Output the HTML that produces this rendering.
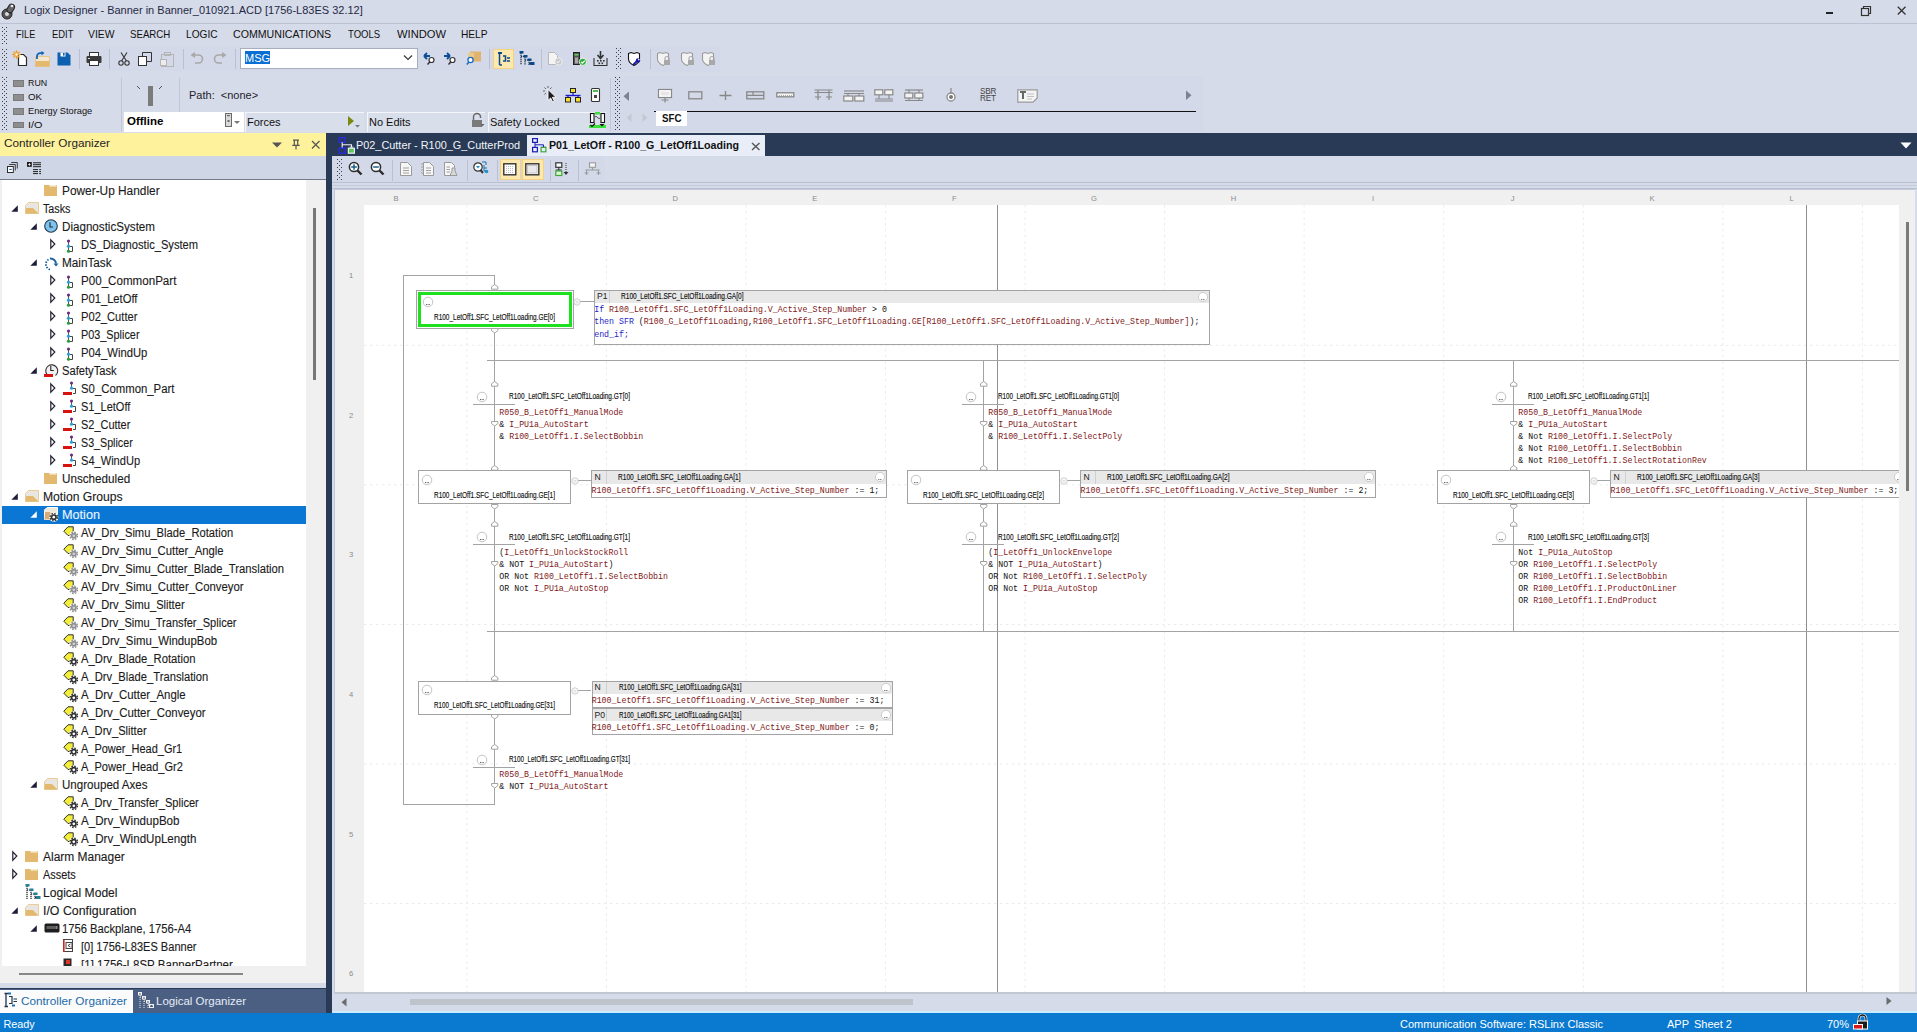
<!DOCTYPE html><html><head><meta charset="utf-8"><style>
*{margin:0;padding:0;box-sizing:border-box}
html,body{width:1917px;height:1032px;overflow:hidden;background:#d6dbe9;font-family:"Liberation Sans",sans-serif;color:#1e1e1e}
.a{position:absolute}
.t{position:absolute;white-space:nowrap;line-height:1}
.m{font-family:"Liberation Mono",monospace}
.tr{-webkit-text-stroke:0.12px currentColor}
.tn{-webkit-text-stroke:0.15px currentColor}
svg{position:absolute;overflow:visible}
</style></head><body>
<div class="a" style="left:0px;top:0px;width:1917px;height:23px;background:#d6dbe9"></div>
<div class="a" style="left:0px;top:23px;width:1917px;height:1px;background:#bcc2d3"></div>
<svg style="left:1px;top:2px" width="16" height="18" viewBox="0 0 16 18"><circle cx="6" cy="12" r="5" fill="#555" stroke="#222" stroke-width="1"/><circle cx="6" cy="12" r="2" fill="#ddd"/><rect x="7" y="2" width="6" height="9" rx="3" fill="#666" stroke="#222" transform="rotate(30 10 6)"/><circle cx="11" cy="4" r="1.3" fill="#eee"/></svg>
<div class="t" style="left:24px;top:5.49px;font-size:11px;color:#1e2a44;">Logix Designer - Banner in Banner_010921.ACD [1756-L83ES 32.12]</div>
<div class="a" style="left:1826px;top:12px;width:6.5px;height:2.2px;background:#222"></div>
<svg style="left:1860px;top:5px" width="12" height="12" viewBox="0 0 12 12"><rect x="1.5" y="3.5" width="7" height="7" fill="none" stroke="#333" stroke-width="1.2"/><path d="M3.5 3.5V1.5H10.5V8.5H8.5" fill="none" stroke="#333" stroke-width="1.2"/></svg>
<svg style="left:1897px;top:6px" width="10" height="10" viewBox="0 0 10 10"><path d="M0.8 0.8L8.5 8.5M8.5 0.8L0.8 8.5" stroke="#333" stroke-width="1.3"/></svg>
<svg style="left:2px;top:27px" width="5" height="17"><defs><pattern id="gp1" width="4" height="4" patternUnits="userSpaceOnUse"><rect x="0" y="0" width="1" height="1" fill="#3a3f4a"/><rect x="2" y="2" width="1" height="1" fill="#3a3f4a"/></pattern></defs><rect width="5" height="17" fill="url(#gp1)"/></svg>
<div class="t" style="left:16px;top:29.22px;font-size:11.2px;color:#111;transform:scaleX(0.8127);transform-origin:0 0;">FILE</div>
<div class="t" style="left:52px;top:29.22px;font-size:11.2px;color:#111;transform:scaleX(0.8398);transform-origin:0 0;">EDIT</div>
<div class="t" style="left:88px;top:29.22px;font-size:11.2px;color:#111;transform:scaleX(0.9234);transform-origin:0 0;">VIEW</div>
<div class="t" style="left:130px;top:29.22px;font-size:11.2px;color:#111;transform:scaleX(0.8644);transform-origin:0 0;">SEARCH</div>
<div class="t" style="left:186px;top:29.22px;font-size:11.2px;color:#111;transform:scaleX(0.9048);transform-origin:0 0;">LOGIC</div>
<div class="t" style="left:233px;top:29.22px;font-size:11.2px;color:#111;transform:scaleX(0.9480);transform-origin:0 0;">COMMUNICATIONS</div>
<div class="t" style="left:348px;top:29.22px;font-size:11.2px;color:#111;transform:scaleX(0.8537);transform-origin:0 0;">TOOLS</div>
<div class="t" style="left:397px;top:29.22px;font-size:11.2px;color:#111;transform:scaleX(0.9982);transform-origin:0 0;">WINDOW</div>
<div class="t" style="left:461px;top:29.22px;font-size:11.2px;color:#111;transform:scaleX(0.9068);transform-origin:0 0;">HELP</div>
<div class="a" style="left:0px;top:47px;width:614px;height:24px;background:#d3d9e8"></div>
<svg style="left:2px;top:49px" width="5" height="21"><defs><pattern id="gp2" width="4" height="4" patternUnits="userSpaceOnUse"><rect x="0" y="0" width="1" height="1" fill="#3a3f4a"/><rect x="2" y="2" width="1" height="1" fill="#3a3f4a"/></pattern></defs><rect width="5" height="21" fill="url(#gp2)"/></svg>
<div class="a" style="left:614px;top:47px;width:106px;height:25px;background:#d3d9e8"></div>
<svg style="left:12px;top:50px" width="17" height="17" viewBox="0 0 17 17"><path d="M6.5 4.5H11.5L14.5 7.5V15.5H6.5Z" fill="#fff" stroke="#2b2b2b" stroke-width="1.2"/><g stroke="#f29a18" stroke-width="1.3" stroke-linecap="round"><path d="M4.5 0.8V8.2M0.8 4.5H8.2M1.9 1.9L7.1 7.1M7.1 1.9L1.9 7.1"/></g><circle cx="4.5" cy="4.5" r="1.2" fill="#fff"/></svg>
<svg style="left:34px;top:51px" width="17" height="16" viewBox="0 0 17 16"><path d="M1.5 15.5V5.5H15.5V15.5Z" fill="#f2e6d0" stroke="#e6c88e" stroke-width="1"/><path d="M1 15.5L2 10H15.5V15.5Z" fill="#e3b96f"/><path d="M3 8V5C3 2.5 6 1.5 9 2" fill="none" stroke="#1565b4" stroke-width="1.8"/><path d="M7.5 0L10.5 2L7.5 4.5Z" fill="#1565b4"/></svg>
<svg style="left:57px;top:52px" width="14" height="14" viewBox="0 0 14 14"><path d="M0.5 0.5H10.5L13.5 3.5V13.5H0.5Z" fill="#0d5fb0"/><rect x="3.5" y="0.5" width="5" height="4" fill="#fff"/><rect x="6" y="1" width="1.6" height="2.6" fill="#0d5fb0"/></svg>
<div class="a" style="left:79px;top:49px;width:1px;height:20px;background:#b9c0d2"></div>
<svg style="left:86px;top:52px" width="16" height="14" viewBox="0 0 16 14"><rect x="3.5" y="0.5" width="9" height="4" fill="#fff" stroke="#333"/><rect x="0.5" y="4" width="15" height="7" rx="1" fill="#3b3b3b"/><rect x="3.5" y="8.5" width="9" height="5" fill="#fff" stroke="#333"/><rect x="2" y="6" width="2" height="1" fill="#ddd"/></svg>
<div class="a" style="left:109px;top:49px;width:1px;height:20px;background:#b9c0d2"></div>
<svg style="left:118px;top:52px" width="12" height="14" viewBox="0 0 12 14"><path d="M3 0.5L8.5 9M9 0.5L3.5 9" stroke="#333" stroke-width="1.1"/><circle cx="3" cy="11" r="2.2" fill="none" stroke="#333" stroke-width="1.1"/><circle cx="9" cy="11" r="2.2" fill="none" stroke="#333" stroke-width="1.1"/></svg>
<svg style="left:138px;top:52px" width="15" height="14" viewBox="0 0 15 14"><rect x="0.5" y="4.5" width="8" height="9" fill="#fff" stroke="#333"/><path d="M4.5 4.5V0.5H13.5V9.5H8.5" fill="none" stroke="#333"/></svg>
<svg style="left:160px;top:51px" width="15" height="16" viewBox="0 0 15 16"><rect x="1.5" y="3.5" width="12" height="12" fill="none" stroke="#b5b5b5"/><rect x="4.5" y="1.5" width="6" height="3" fill="none" stroke="#b5b5b5"/><rect x="0.5" y="8.5" width="6" height="6" fill="#ececec" stroke="#b5b5b5"/></svg>
<div class="a" style="left:183px;top:49px;width:1px;height:20px;background:#b9c0d2"></div>
<svg style="left:190px;top:52px" width="14" height="14" viewBox="0 0 14 14"><path d="M4 3H8.5A4 4 0 0 1 8.5 11H5" fill="none" stroke="#a8a8a8" stroke-width="1.6"/><path d="M0.5 3L5 0V6Z" fill="#a8a8a8"/></svg>
<svg style="left:213px;top:52px" width="14" height="14" viewBox="0 0 14 14"><path d="M10 3H5.5A4 4 0 0 0 5.5 11H9" fill="none" stroke="#a8a8a8" stroke-width="1.6"/><path d="M13.5 3L9 0V6Z" fill="#a8a8a8"/></svg>
<div class="a" style="left:235px;top:49px;width:1px;height:20px;background:#b9c0d2"></div>
<svg style="left:423px;top:52px" width="13" height="14" viewBox="0 0 13 14"><path d="M1 4H7M1 4L4 1M1 4L4 7" stroke="#0b4f9a" stroke-width="1.9" fill="none"/><circle cx="8.5" cy="8" r="2.5" fill="#fff" stroke="#333" stroke-width="1.2"/><path d="M7 9.8L4.5 12.5" stroke="#333" stroke-width="1.5"/></svg>
<svg style="left:444px;top:52px" width="13" height="14" viewBox="0 0 13 14"><path d="M0 4H6M6 4L3 1M6 4L3 7" stroke="#0b4f9a" stroke-width="1.9" fill="none"/><circle cx="8.5" cy="8" r="2.5" fill="#fff" stroke="#333" stroke-width="1.2"/><path d="M7 9.8L4.5 12.5" stroke="#333" stroke-width="1.5"/></svg>
<svg style="left:466px;top:51px" width="16" height="15" viewBox="0 0 16 15"><rect x="4" y="0.5" width="11" height="10" fill="#e0b46e"/><rect x="2" y="2" width="6" height="4" fill="#e9c98e"/><circle cx="4.5" cy="9" r="2.6" fill="#fff" stroke="#1d6bc0" stroke-width="1.3"/><path d="M3 11L0.8 13.5" stroke="#1d6bc0" stroke-width="1.6"/></svg>
<div class="a" style="left:489px;top:49px;width:1px;height:20px;background:#b9c0d2"></div>
<div class="a" style="left:493px;top:48.5px;width:21px;height:20px;background:#fde9b0;border:1px solid #f3d27f"></div>
<svg style="left:497px;top:52px" width="14" height="14" viewBox="0 0 14 14"><path d="M2.5 1V13M2.5 1H5M2.5 13H5M6 4H8.5V9H6M10 6H13M10 9H13" fill="none" stroke="#0b4a8a" stroke-width="1.5"/><rect x="1" y="0" width="4" height="2" fill="#0b4a8a"/></svg>
<svg style="left:519px;top:51px" width="16" height="15" viewBox="0 0 16 15"><path d="M2 2V14M2 5.5H6V14M6 9H10V14M10 12.5H13" fill="none" stroke="#1a2a40" stroke-width="1.2" stroke-dasharray="1.2 0.8"/><rect x="0.5" y="0" width="4" height="2.5" fill="#0b4a8a"/><rect x="4.5" y="4" width="4" height="2.5" fill="#0b4a8a"/><rect x="8.5" y="7.5" width="4" height="2.5" fill="#0b4a8a"/><rect x="11" y="11" width="4.5" height="3" fill="#0b4a8a"/></svg>
<div class="a" style="left:541px;top:49px;width:1px;height:20px;background:#b9c0d2"></div>
<svg style="left:548px;top:52px" width="15" height="14" viewBox="0 0 15 14"><path d="M0.5 0.5H6.5L9.5 3.5V12.5H0.5Z" fill="#f4f4f4" stroke="#b8b8b8"/><circle cx="10.5" cy="9.5" r="3.6" fill="#c8c8c8" stroke="#eee"/><path d="M8.7 9.5L10 10.8L12.3 8.3" stroke="#fff" stroke-width="1" fill="none"/></svg>
<svg style="left:573px;top:52px" width="14" height="14" viewBox="0 0 14 14"><rect x="0.5" y="0.5" width="6" height="12" fill="#555" stroke="#222"/><rect x="1.5" y="2" width="4" height="1.5" fill="#5bd35b"/><rect x="2" y="5.5" width="3" height="6" fill="#aaa"/><circle cx="9.8" cy="9.8" r="3.6" fill="#2fae3a" stroke="#fff" stroke-width="0.8"/><path d="M8 9.8L9.4 11.2L11.8 8.6" stroke="#fff" stroke-width="1.1" fill="none"/></svg>
<svg style="left:593px;top:51px" width="15" height="16" viewBox="0 0 15 16"><path d="M7.5 0V7M4.5 4L7.5 7.5L10.5 4" stroke="#333" stroke-width="1.6" fill="none"/><path d="M1 7V14.5H14V7" stroke="#333" stroke-width="1.1" fill="none"/><g fill="#333"><rect x="4" y="9" width="1.6" height="1.6"/><rect x="7" y="9" width="1.6" height="1.6"/><rect x="10" y="9" width="1.6" height="1.6"/><rect x="5.5" y="11.5" width="1.6" height="1.6"/><rect x="8.5" y="11.5" width="1.6" height="1.6"/></g></svg>
<svg style="left:616px;top:48px" width="5" height="22"><defs><pattern id="gp3" width="4" height="4" patternUnits="userSpaceOnUse"><rect x="0" y="0" width="1" height="1" fill="#3a3f4a"/><rect x="2" y="2" width="1" height="1" fill="#3a3f4a"/></pattern></defs><rect width="5" height="22" fill="url(#gp3)"/></svg>
<svg style="left:628px;top:52px" width="14" height="14" viewBox="0 0 14 14"><path d="M0.5 1.5L3 0.5L6 1.5L9 0.5L11.5 1.5V7C11.5 10 8 12.5 6 13.5C4 12.5 0.5 10 0.5 7Z" fill="#fff" stroke="#111" stroke-width="1.1"/><path d="M5 13L9 9" stroke="#1a1aa0" stroke-width="1.8"/><circle cx="10" cy="8.5" r="2.2" fill="#1a1aa0"/><circle cx="10.8" cy="7.6" r="0.8" fill="#fff"/></svg>
<div class="a" style="left:650px;top:49px;width:1px;height:20px;background:#b9c0d2"></div>
<svg style="left:657px;top:52px" width="14" height="14" viewBox="0 0 14 14"><path d="M0.5 1.5L3 0.5L6 1.5L9 0.5L11.5 1.5V7C11.5 10 8 12.5 6 13.5C4 12.5 0.5 10 0.5 7Z" fill="#f3f3f3" stroke="#9a9a9a" stroke-width="1.1"/><rect x="7" y="8" width="6" height="5" fill="#a8a8a8"/><path d="M8 8V6.5A2 2 0 0 1 12 6.5V8" fill="none" stroke="#a8a8a8" stroke-width="1.1"/></svg>
<svg style="left:681px;top:52px" width="14" height="14" viewBox="0 0 14 14"><path d="M0.5 1.5L3 0.5L6 1.5L9 0.5L11.5 1.5V7C11.5 10 8 12.5 6 13.5C4 12.5 0.5 10 0.5 7Z" fill="#f3f3f3" stroke="#9a9a9a" stroke-width="1.1"/><rect x="7" y="8" width="6" height="5" fill="#a8a8a8"/><path d="M8 8V6.5A2 2 0 0 1 12 6.5V8" fill="none" stroke="#a8a8a8" stroke-width="1.1"/></svg>
<svg style="left:702px;top:52px" width="14" height="14" viewBox="0 0 14 14"><path d="M0.5 1.5L3 0.5L6 1.5L9 0.5L11.5 1.5V7C11.5 10 8 12.5 6 13.5C4 12.5 0.5 10 0.5 7Z" fill="#f3f3f3" stroke="#9a9a9a" stroke-width="1.1"/><rect x="7" y="8" width="6" height="5" fill="#a8a8a8"/><path d="M8 8V6.5A2 2 0 0 1 12 6.5V8" fill="none" stroke="#a8a8a8" stroke-width="1.1"/></svg>
<div class="a" style="left:240px;top:48px;width:178px;height:21px;background:#fff;border:1px solid #a8aebd"></div>
<div class="a" style="left:245px;top:51px;width:25px;height:13px;background:#0a6fd2"></div>
<div class="t" style="left:245px;top:52.89px;font-size:11px;color:#fff;">MSG</div>
<svg style="left:403px;top:54px" width="10" height="8" viewBox="0 0 10 8"><path d="M1 1.5L5 5.5L9 1.5" fill="none" stroke="#333" stroke-width="1.1"/></svg>
<svg style="left:2px;top:77px" width="5" height="53"><defs><pattern id="gp4" width="4" height="4" patternUnits="userSpaceOnUse"><rect x="0" y="0" width="1" height="1" fill="#3a3f4a"/><rect x="2" y="2" width="1" height="1" fill="#3a3f4a"/></pattern></defs><rect width="5" height="53" fill="url(#gp4)"/></svg>
<div class="a" style="left:13.3px;top:80.0px;width:10.5px;height:6.7px;background:#8e8e8e;border:1px solid #7a7a7a"></div>
<div class="t" style="left:28.3px;top:78.40px;font-size:9.8px;color:#111;transform:scaleX(0.9046);transform-origin:0 0;">RUN</div>
<div class="a" style="left:13.3px;top:94.0px;width:10.5px;height:6.7px;background:#8e8e8e;border:1px solid #7a7a7a"></div>
<div class="t" style="left:28.3px;top:92.40px;font-size:9.8px;color:#111;transform:scaleX(0.9891);transform-origin:0 0;">OK</div>
<div class="a" style="left:13.3px;top:107.89999999999999px;width:10.5px;height:6.7px;background:#8e8e8e;border:1px solid #7a7a7a"></div>
<div class="t" style="left:28.3px;top:106.30px;font-size:9.8px;color:#111;transform:scaleX(0.9431);transform-origin:0 0;">Energy Storage</div>
<div class="a" style="left:13.3px;top:121.7px;width:10.5px;height:6.7px;background:#8e8e8e;border:1px solid #7a7a7a"></div>
<div class="t" style="left:28.3px;top:120.10px;font-size:9.8px;color:#111;transform:scaleX(1.1099);transform-origin:0 0;">I/O</div>
<div class="a" style="left:121px;top:78px;width:1px;height:53px;background:#c0c6d6"></div>
<div class="a" style="left:179px;top:78px;width:1px;height:35px;background:#c0c6d6"></div>
<div class="a" style="left:148px;top:86px;width:5px;height:20px;background:#7b7b7b"></div>
<svg style="left:135px;top:84px" width="30" height="10" viewBox="0 0 30 10"><path d="M2 2L5 5" stroke="#555" stroke-width="1"/><path d="M27 2L24 5" stroke="#555" stroke-width="1"/></svg>
<div class="t" style="left:189px;top:89.69px;font-size:11px;color:#1e1e2e;">Path:&nbsp; &lt;none&gt;</div>
<div class="a" style="left:124px;top:112px;width:120px;height:20px;background:#fff"></div>
<div class="t" style="left:127px;top:116.26px;font-size:11.5px;color:#000;font-weight:bold">Offline</div>
<svg style="left:225px;top:113px" width="8" height="15" viewBox="0 0 8 15"><rect x="0.5" y="0.5" width="6" height="13" fill="#d9d9d9" stroke="#6a6a6a"/><rect x="2" y="2" width="3" height="1.2" fill="#6a6a6a"/><rect x="2.5" y="7" width="2" height="2" fill="#6a6a6a"/></svg>
<svg style="left:233px;top:120px" width="8" height="6" viewBox="0 0 8 6"><path d="M1 1H7L4 4Z" fill="#777"/></svg>
<div class="a" style="left:245px;top:112px;width:119px;height:20px;background:#d9deeb;border-left:1px solid #f4f6fb;border-top:1px solid #f4f6fb"></div>
<div class="t" style="left:247px;top:116.69px;font-size:11px;color:#111;">Forces</div>
<svg style="left:347px;top:115px" width="14" height="14" viewBox="0 0 14 14"><path d="M1 1L7 6L1 11Z" fill="#7a8a10"/><path d="M8 10H13L10.5 12.5Z" fill="#777"/></svg>
<div class="a" style="left:367px;top:112px;width:118px;height:20px;background:#d9deeb;border-left:1px solid #f4f6fb;border-top:1px solid #f4f6fb"></div>
<div class="t" style="left:369px;top:116.69px;font-size:11px;color:#111;">No Edits</div>
<div class="a" style="left:488px;top:112px;width:118px;height:20px;background:#d9deeb;border-left:1px solid #f4f6fb;border-top:1px solid #f4f6fb"></div>
<div class="t" style="left:490px;top:116.69px;font-size:11px;color:#111;">Safety Locked</div>
<div class="a" style="left:612px;top:76px;width:591px;height:55px;background:#d3d9e8"></div>
<svg style="left:543px;top:86px" width="15" height="17" viewBox="0 0 15 17"><path d="M5 3.5V14.5L7.6 12L9.6 16L11.4 15.2L9.4 11.3H13Z" fill="#1e1e1e" stroke="#fff" stroke-width="0.9"/><g stroke="#555" stroke-width="0.9"><path d="M1.5 1.5L3 3M5 0V2M8.5 1.5L7 3M0 5H2M1.5 8.5L3 7"/></g></svg>
<svg style="left:565px;top:88px" width="16" height="15" viewBox="0 0 16 15"><rect x="5.5" y="0.5" width="5" height="4" fill="#f6df2d" stroke="#222" stroke-width="1"/><path d="M8 4.5V7.5M2.5 7.5H13.5M3 7.5V9.5M13 7.5V9.5" stroke="#1a1ad0" stroke-width="1.2" fill="none"/><path d="M0.5 7.5H15.5" stroke="#1a1ad0" stroke-width="1.4"/><rect x="0.5" y="9.5" width="5" height="4.5" fill="#f6df2d" stroke="#222"/><rect x="10.5" y="9.5" width="5" height="4.5" fill="#f6df2d" stroke="#222"/></svg>
<svg style="left:591px;top:88px" width="10" height="15" viewBox="0 0 10 15"><rect x="0.5" y="0.5" width="8" height="13" rx="1" fill="#fff" stroke="#333" stroke-width="1.1"/><rect x="2" y="2" width="5" height="2" fill="#4fbf4f"/><rect x="3" y="7" width="3" height="3" fill="#444"/></svg>
<div class="a" style="left:610px;top:78px;width:1px;height:53px;background:#c2c8d7"></div>
<svg style="left:589px;top:112px" width="17" height="16" viewBox="0 0 17 16"><rect x="0" y="13" width="17" height="3" fill="#3ce03c"/><rect x="6" y="0" width="5" height="2.5" fill="#3ce03c"/><rect x="1.5" y="1.5" width="3.5" height="9" fill="#fff" stroke="#111" stroke-width="1.1"/><rect x="12" y="1.5" width="3.5" height="9" fill="#fff" stroke="#111" stroke-width="1.1"/><path d="M6 5C8 3 9 8 11 6" stroke="#333" fill="none"/><path d="M1.5 13L3 14.5L6 11.5" stroke="#111" fill="none" stroke-width="1.1"/><path d="M10.5 12H15.5L13 14.5Z" fill="#111"/></svg>
<svg style="left:471px;top:113px" width="14" height="15" viewBox="0 0 14 15"><path d="M2.5 7V4A3.5 3.5 0 0 1 9.5 4V5" fill="none" stroke="#666" stroke-width="1.4"/><rect x="1" y="7" width="10" height="7" fill="#7a7a7a"/><path d="M9.5 11H13.5L11.5 13.5Z" fill="#666"/></svg>
<svg style="left:615px;top:77px" width="5" height="54"><defs><pattern id="gp5" width="4" height="4" patternUnits="userSpaceOnUse"><rect x="0" y="0" width="1" height="1" fill="#3a3f4a"/><rect x="2" y="2" width="1" height="1" fill="#3a3f4a"/></pattern></defs><rect width="5" height="54" fill="url(#gp5)"/></svg>
<svg style="left:623px;top:91px" width="7" height="11" viewBox="0 0 7 11"><path d="M6 0.5V10L0.5 5.2Z" fill="#7b8290"/></svg>
<svg style="left:658px;top:89px" width="15" height="14" viewBox="0 0 15 14"><rect x="0.5" y="0.5" width="13" height="8" fill="#fff" stroke="#888" stroke-width="1.2"/><rect x="2.5" y="2.5" width="9" height="4" fill="#e6e6e6"/><path d="M7 9V13.5M3.5 11H10.5" stroke="#888" stroke-width="1.2"/></svg>
<svg style="left:688px;top:91px" width="15" height="9" viewBox="0 0 15 9"><rect x="0.8" y="0.8" width="13" height="7" fill="none" stroke="#888" stroke-width="1.3"/></svg>
<svg style="left:719px;top:91px" width="13" height="9" viewBox="0 0 13 9"><path d="M6.5 0V9M0.5 4.5H12.5" stroke="#888" stroke-width="1.3"/></svg>
<svg style="left:746px;top:91px" width="19" height="9" viewBox="0 0 19 9"><rect x="0.8" y="0.8" width="17" height="7" fill="none" stroke="#888" stroke-width="1.3"/><path d="M1 4.3H18M7 1V4" stroke="#888" stroke-width="1.2"/></svg>
<svg style="left:776px;top:92px" width="19" height="6" viewBox="0 0 19 6"><rect x="0.8" y="0.8" width="17" height="4" fill="#f3f3f3" stroke="#888" stroke-width="1.3"/><path d="M3 3.5H16" stroke="#aaa" stroke-dasharray="1 1"/></svg>
<svg style="left:814px;top:89px" width="19" height="12" viewBox="0 0 19 12"><path d="M0.5 1H18.5M0.5 3.5H18.5M4 1V11M15 1V11M1 8H7M12 8H18" stroke="#888" stroke-width="1.2"/></svg>
<svg style="left:843px;top:90px" width="22" height="12" viewBox="0 0 22 12"><path d="M1 1H21" stroke="#888" stroke-width="1.2"/><rect x="0.8" y="6" width="9" height="5" fill="#f3f3f3" stroke="#888" stroke-width="1.2"/><rect x="11.8" y="6" width="9" height="5" fill="#f3f3f3" stroke="#888" stroke-width="1.2"/><path d="M1 3.5H21M5 3.5V6M16 3.5V6" stroke="#888" stroke-width="1.1"/></svg>
<svg style="left:874px;top:89px" width="20" height="13" viewBox="0 0 20 13"><rect x="0.8" y="0.8" width="8" height="5" fill="#f3f3f3" stroke="#888" stroke-width="1.2"/><rect x="10.8" y="0.8" width="8" height="5" fill="#f3f3f3" stroke="#888" stroke-width="1.2"/><path d="M5 6V10M15 6V10M1 10H19M1 12H19" stroke="#888" stroke-width="1.1"/></svg>
<svg style="left:904px;top:89px" width="20" height="13" viewBox="0 0 20 13"><path d="M1 1H19" stroke="#888" stroke-width="1.2"/><rect x="0.8" y="4" width="8" height="5" fill="#f3f3f3" stroke="#888" stroke-width="1.2"/><rect x="10.8" y="4" width="8" height="5" fill="#f3f3f3" stroke="#888" stroke-width="1.2"/><path d="M5 1V4M15 1V4M5 9V12M15 9V12M1 11.5H19" stroke="#888" stroke-width="1.1"/></svg>
<svg style="left:945px;top:88px" width="12" height="15" viewBox="0 0 12 15"><path d="M6 0V5" stroke="#888" stroke-width="1.2"/><circle cx="6" cy="9" r="4" fill="#fff" stroke="#888" stroke-width="1.3"/><circle cx="6" cy="9" r="2" fill="#777"/></svg>
<div class="t" style="left:980px;top:88px;font-size:8.2px;line-height:7.3px;color:#444;letter-spacing:-0.2px">SBR<br>RET</div>
<svg style="left:1017px;top:89px" width="21" height="14" viewBox="0 0 21 14"><path d="M0.8 0.8H20.2V9L16 13.2H0.8Z" fill="#f4f4f4" stroke="#999" stroke-width="1.2"/><path d="M3 3H9M6 3V10" stroke="#666" stroke-width="2"/><path d="M10 5H17M10 7.5H17M10 10H15" stroke="#bbb" stroke-width="0.9"/></svg>
<svg style="left:1185px;top:90px" width="7" height="11" viewBox="0 0 7 11"><path d="M1 0.5V10L6.5 5.2Z" fill="#7b8290"/></svg>
<div class="a" style="left:654px;top:110.5px;width:542px;height:1.6px;background:#111"></div>
<svg style="left:626px;top:113px" width="6" height="10" viewBox="0 0 6 10"><path d="M5.5 0.5V9L0.5 4.8Z" fill="#c4c8d2"/></svg>
<svg style="left:642px;top:113px" width="6" height="10" viewBox="0 0 6 10"><path d="M0.5 0.5V9L5.5 4.8Z" fill="#c4c8d2"/></svg>
<div class="a" style="left:655.5px;top:111px;width:31.5px;height:14.5px;background:#fff"></div>
<div class="t" style="left:662px;top:112.59px;font-size:11px;color:#111;font-weight:bold;transform:scaleX(0.8864);transform-origin:0 0;">SFC</div>
<div class="a" style="left:0px;top:1013px;width:1917px;height:19px;background:#0a7ad0"></div>
<div class="t" style="left:3.5px;top:1019.46px;font-size:10.8px;color:#fff;">Ready</div>
<div class="t" style="left:1400px;top:1019.19px;font-size:11px;color:#fff;">Communication Software: RSLinx Classic</div>
<div class="t" style="left:1667px;top:1019.19px;font-size:11px;color:#fff;">APP</div>
<div class="t" style="left:1694px;top:1019.19px;font-size:11px;color:#fff;">Sheet 2</div>
<div class="t" style="left:1827px;top:1019.19px;font-size:11px;color:#fff;">70%</div>
<svg style="left:1853px;top:1014px" width="17" height="16" viewBox="0 0 17 16"><path d="M6 7V4.5A3.5 3.5 0 0 1 13 4.5V7" fill="none" stroke="#fff" stroke-width="2.6"/><path d="M6 7V4.5A3.5 3.5 0 0 1 13 4.5V7" fill="none" stroke="#1a1a1a" stroke-width="1.3"/><rect x="4.5" y="7" width="10" height="8" fill="#1a1a1a" stroke="#fff" stroke-width="1"/><rect x="0.5" y="10.5" width="9" height="4.5" fill="#d81818" stroke="#fff" stroke-width="1"/></svg>
<div class="a" style="left:0px;top:133px;width:326px;height:22.5px;background:#fff29d"></div>
<div class="t" style="left:4px;top:138.21px;font-size:11.8px;color:#1e1e1e;transform:scaleX(0.9980);transform-origin:0 0;">Controller Organizer</div>
<svg style="left:271px;top:141px" width="12" height="8" viewBox="0 0 12 8"><path d="M1 1.5H11L6 6.5Z" fill="#555"/></svg>
<svg style="left:291px;top:139px" width="10" height="12" viewBox="0 0 10 12"><path d="M2 1.2H8M3.3 1.2V6M6.7 1.2V6M1.3 6.3H8.7M5 6.5V10.5" fill="none" stroke="#555" stroke-width="1.2"/></svg>
<svg style="left:311px;top:140px" width="10" height="10" viewBox="0 0 10 10"><path d="M1 1L8.5 8.5M8.5 1L1 8.5" stroke="#555" stroke-width="1.25"/></svg>
<div class="a" style="left:0px;top:155.5px;width:326px;height:24px;background:#cfd6e5"></div>
<div class="a" style="left:0px;top:178.8px;width:326px;height:1.2px;background:#737a8c"></div>
<svg style="left:6px;top:161px" width="14" height="14" viewBox="0 0 14 14"><path d="M5.2 1.5H11.3V7.5M3.2 3.5H9.3V9.5" fill="none" stroke="#2b2b2b" stroke-width="0.9"/><rect x="1.5" y="5.5" width="5.8" height="6" fill="#fff" stroke="#2b2b2b" stroke-width="1"/><path d="M3.2 8.4H5.8" stroke="#1a6fb0" stroke-width="1.1"/></svg>
<svg style="left:26px;top:161px" width="16" height="15" viewBox="0 0 16 15"><rect x="1" y="1" width="4.8" height="4.8" fill="#1e1e1e"/><path d="M3.4 1.8L3.9 2.9L5 3.4L3.9 3.9L3.4 5L2.9 3.9L1.8 3.4L2.9 2.9Z" fill="#fff"/><path d="M7 1.8H15M7 3.7H15M7 5.7H15M7 8.6H12M7 10.6H12M7 12.6H12M13.2 8.6H15M13.2 10.6H15M13.2 12.6H15" stroke="#222" stroke-width="1"/></svg>
<div class="a" style="left:0px;top:180px;width:326px;height:809px;background:#f0f0f0"></div>
<div class="a" style="left:2px;top:180px;width:304px;height:786px;background:#fff"></div>
<div class="a" style="left:313px;top:208px;width:3px;height:172px;background:#777"></div>
<div class="a" style="left:19px;top:972.5px;width:224px;height:2px;background:#888"></div>
<div class="a" style="left:0px;top:983px;width:326px;height:6px;background:#d6dbe9"></div>
<div class="a" style="left:0px;top:988px;width:326px;height:1px;background:#2b3a55"></div>
<div class="a" style="left:0;top:0;width:306px;height:966px;overflow:hidden"><svg style="left:44.4px;top:184px" width="14" height="12" viewBox="0 0 14 12"><rect x="0" y="1" width="13" height="11" fill="#e3b96f"/><rect x="5.5" y="1" width="7" height="1.6" fill="#f7ecd4"/></svg>
<div class="t tr" style="left:62.4px;top:184.74px;font-size:12px;color:#1a1a1a;transform:scaleX(0.9888);transform-origin:0 0;">Power-Up Handler</div>
<svg style="left:10.5px;top:205.0px" width="8" height="8" viewBox="0 0 8 8"><path d="M6.8 0.3V6.8H0.3Z" fill="#1e1e3a"/></svg>
<svg style="left:25.200000000000003px;top:202px" width="14" height="12" viewBox="0 0 14 12"><path d="M0.5 11.5V3.5L3.5 0.5H13.5V11.5Z" fill="#e9e6e2" stroke="#e8cd9a"/><path d="M0.5 11.5L1 6H8L13.5 11.5Z" fill="#e3b96f"/></svg>
<div class="t tr" style="left:43.2px;top:202.74px;font-size:12px;color:#1a1a1a;transform:scaleX(0.8933);transform-origin:0 0;">Tasks</div>
<svg style="left:29.8px;top:223.0px" width="8" height="8" viewBox="0 0 8 8"><path d="M6.8 0.3V6.8H0.3Z" fill="#1e1e3a"/></svg>
<svg style="left:44.4px;top:219px" width="14" height="14" viewBox="0 0 14 14"><circle cx="7" cy="7" r="6.3" fill="#7fc4ee" stroke="#2a3848" stroke-width="1.1"/><path d="M6 3.2V8H9" fill="none" stroke="#1e2a3a" stroke-width="1.1"/></svg>
<div class="t tr" style="left:62.4px;top:220.74px;font-size:12px;color:#1a1a1a;transform:scaleX(0.9684);transform-origin:0 0;">DiagnosticSystem</div>
<svg style="left:50.3px;top:238.6px" width="7" height="11" viewBox="0 0 7 11"><path d="M0.8 0.8L4.8 5L0.8 9.3Z" fill="none" stroke="#1e1e30" stroke-width="1.2"/></svg>
<svg style="left:64.3px;top:237.5px" width="12" height="16" viewBox="0 0 12 16"><path d="M4.5 3V13" stroke="#555" stroke-width="1"/><path d="M4.5 8.5H8.5V13.5H4.5" fill="none" stroke="#444" stroke-width="1"/><circle cx="4.5" cy="3" r="1.6" fill="#6a2c82"/><circle cx="4.5" cy="8.2" r="1.6" fill="#2aa0d8"/><circle cx="4.5" cy="13.2" r="1.6" fill="#2e9a3a"/></svg>
<div class="t tr" style="left:81.3px;top:238.74px;font-size:12px;color:#1a1a1a;transform:scaleX(0.9290);transform-origin:0 0;">DS_Diagnostic_System</div>
<svg style="left:29.8px;top:259.0px" width="8" height="8" viewBox="0 0 8 8"><path d="M6.8 0.3V6.8H0.3Z" fill="#1e1e3a"/></svg>
<svg style="left:44.4px;top:256.5px" width="15" height="14" viewBox="0 0 15 14"><path d="M6 12.5A5.5 5.5 0 0 1 4.5 2.5" fill="none" stroke="#1a5f9e" stroke-width="1.8" stroke-dasharray="1.5 1.3"/><path d="M6 1.5A5.5 5.5 0 0 1 12 6.5" fill="none" stroke="#1a5f9e" stroke-width="2"/><path d="M9.5 6.5H14.5L12 9.5Z" fill="#1a5f9e"/></svg>
<div class="t tr" style="left:62.4px;top:256.74px;font-size:12px;color:#1a1a1a;transform:scaleX(0.9786);transform-origin:0 0;">MainTask</div>
<svg style="left:50.3px;top:274.6px" width="7" height="11" viewBox="0 0 7 11"><path d="M0.8 0.8L4.8 5L0.8 9.3Z" fill="none" stroke="#1e1e30" stroke-width="1.2"/></svg>
<svg style="left:64.3px;top:273.5px" width="12" height="16" viewBox="0 0 12 16"><path d="M4.5 3V13" stroke="#555" stroke-width="1"/><path d="M4.5 8.5H8.5V13.5H4.5" fill="none" stroke="#444" stroke-width="1"/><circle cx="4.5" cy="3" r="1.6" fill="#6a2c82"/><circle cx="4.5" cy="8.2" r="1.6" fill="#2aa0d8"/><circle cx="4.5" cy="13.2" r="1.6" fill="#2e9a3a"/></svg>
<div class="t tr" style="left:81.3px;top:274.74px;font-size:12px;color:#1a1a1a;transform:scaleX(0.9664);transform-origin:0 0;">P00_CommonPart</div>
<svg style="left:50.3px;top:292.6px" width="7" height="11" viewBox="0 0 7 11"><path d="M0.8 0.8L4.8 5L0.8 9.3Z" fill="none" stroke="#1e1e30" stroke-width="1.2"/></svg>
<svg style="left:64.3px;top:291.5px" width="12" height="16" viewBox="0 0 12 16"><path d="M4.5 3V13" stroke="#555" stroke-width="1"/><path d="M4.5 8.5H8.5V13.5H4.5" fill="none" stroke="#444" stroke-width="1"/><circle cx="4.5" cy="3" r="1.6" fill="#6a2c82"/><circle cx="4.5" cy="8.2" r="1.6" fill="#2aa0d8"/><circle cx="4.5" cy="13.2" r="1.6" fill="#2e9a3a"/></svg>
<div class="t tr" style="left:81.3px;top:292.74px;font-size:12px;color:#1a1a1a;transform:scaleX(0.9324);transform-origin:0 0;">P01_LetOff</div>
<svg style="left:50.3px;top:310.6px" width="7" height="11" viewBox="0 0 7 11"><path d="M0.8 0.8L4.8 5L0.8 9.3Z" fill="none" stroke="#1e1e30" stroke-width="1.2"/></svg>
<svg style="left:64.3px;top:309.5px" width="12" height="16" viewBox="0 0 12 16"><path d="M4.5 3V13" stroke="#555" stroke-width="1"/><path d="M4.5 8.5H8.5V13.5H4.5" fill="none" stroke="#444" stroke-width="1"/><circle cx="4.5" cy="3" r="1.6" fill="#6a2c82"/><circle cx="4.5" cy="8.2" r="1.6" fill="#2aa0d8"/><circle cx="4.5" cy="13.2" r="1.6" fill="#2e9a3a"/></svg>
<div class="t tr" style="left:81.3px;top:310.74px;font-size:12px;color:#1a1a1a;transform:scaleX(0.9291);transform-origin:0 0;">P02_Cutter</div>
<svg style="left:50.3px;top:328.6px" width="7" height="11" viewBox="0 0 7 11"><path d="M0.8 0.8L4.8 5L0.8 9.3Z" fill="none" stroke="#1e1e30" stroke-width="1.2"/></svg>
<svg style="left:64.3px;top:327.5px" width="12" height="16" viewBox="0 0 12 16"><path d="M4.5 3V13" stroke="#555" stroke-width="1"/><path d="M4.5 8.5H8.5V13.5H4.5" fill="none" stroke="#444" stroke-width="1"/><circle cx="4.5" cy="3" r="1.6" fill="#6a2c82"/><circle cx="4.5" cy="8.2" r="1.6" fill="#2aa0d8"/><circle cx="4.5" cy="13.2" r="1.6" fill="#2e9a3a"/></svg>
<div class="t tr" style="left:81.3px;top:328.74px;font-size:12px;color:#1a1a1a;transform:scaleX(0.9041);transform-origin:0 0;">P03_Splicer</div>
<svg style="left:50.3px;top:346.6px" width="7" height="11" viewBox="0 0 7 11"><path d="M0.8 0.8L4.8 5L0.8 9.3Z" fill="none" stroke="#1e1e30" stroke-width="1.2"/></svg>
<svg style="left:64.3px;top:345.5px" width="12" height="16" viewBox="0 0 12 16"><path d="M4.5 3V13" stroke="#555" stroke-width="1"/><path d="M4.5 8.5H8.5V13.5H4.5" fill="none" stroke="#444" stroke-width="1"/><circle cx="4.5" cy="3" r="1.6" fill="#6a2c82"/><circle cx="4.5" cy="8.2" r="1.6" fill="#2aa0d8"/><circle cx="4.5" cy="13.2" r="1.6" fill="#2e9a3a"/></svg>
<div class="t tr" style="left:81.3px;top:346.74px;font-size:12px;color:#1a1a1a;transform:scaleX(0.9377);transform-origin:0 0;">P04_WindUp</div>
<svg style="left:29.8px;top:367.0px" width="8" height="8" viewBox="0 0 8 8"><path d="M6.8 0.3V6.8H0.3Z" fill="#1e1e3a"/></svg>
<svg style="left:44.4px;top:363px" width="15" height="15" viewBox="0 0 15 15"><path d="M3 11.5A6 6 0 1 1 11.5 12.5" fill="#f0f0f0" stroke="#333" stroke-width="1.1"/><path d="M6.8 2.5V7.5H9.8" fill="none" stroke="#222" stroke-width="1.1"/><rect x="0" y="11" width="9" height="3" fill="#d6140d"/></svg>
<div class="t tr" style="left:62.4px;top:364.74px;font-size:12px;color:#1a1a1a;transform:scaleX(0.9303);transform-origin:0 0;">SafetyTask</div>
<svg style="left:50.3px;top:382.6px" width="7" height="11" viewBox="0 0 7 11"><path d="M0.8 0.8L4.8 5L0.8 9.3Z" fill="none" stroke="#1e1e30" stroke-width="1.2"/></svg>
<svg style="left:63.3px;top:380px" width="14" height="16" viewBox="0 0 14 16"><path d="M8.5 3V8" stroke="#555" stroke-width="1"/><path d="M8.5 8.5H12.5V13.5H10" fill="none" stroke="#444" stroke-width="1"/><circle cx="8.5" cy="3" r="1.6" fill="#6a2c82"/><circle cx="8.5" cy="8.2" r="1.6" fill="#2aa0d8"/><rect x="0" y="12" width="9" height="3" fill="#d6140d"/></svg>
<div class="t tr" style="left:81.3px;top:382.74px;font-size:12px;color:#1a1a1a;transform:scaleX(0.9462);transform-origin:0 0;">S0_Common_Part</div>
<svg style="left:50.3px;top:400.6px" width="7" height="11" viewBox="0 0 7 11"><path d="M0.8 0.8L4.8 5L0.8 9.3Z" fill="none" stroke="#1e1e30" stroke-width="1.2"/></svg>
<svg style="left:63.3px;top:398px" width="14" height="16" viewBox="0 0 14 16"><path d="M8.5 3V8" stroke="#555" stroke-width="1"/><path d="M8.5 8.5H12.5V13.5H10" fill="none" stroke="#444" stroke-width="1"/><circle cx="8.5" cy="3" r="1.6" fill="#6a2c82"/><circle cx="8.5" cy="8.2" r="1.6" fill="#2aa0d8"/><rect x="0" y="12" width="9" height="3" fill="#d6140d"/></svg>
<div class="t tr" style="left:81.3px;top:400.74px;font-size:12px;color:#1a1a1a;transform:scaleX(0.9160);transform-origin:0 0;">S1_LetOff</div>
<svg style="left:50.3px;top:418.6px" width="7" height="11" viewBox="0 0 7 11"><path d="M0.8 0.8L4.8 5L0.8 9.3Z" fill="none" stroke="#1e1e30" stroke-width="1.2"/></svg>
<svg style="left:63.3px;top:416px" width="14" height="16" viewBox="0 0 14 16"><path d="M8.5 3V8" stroke="#555" stroke-width="1"/><path d="M8.5 8.5H12.5V13.5H10" fill="none" stroke="#444" stroke-width="1"/><circle cx="8.5" cy="3" r="1.6" fill="#6a2c82"/><circle cx="8.5" cy="8.2" r="1.6" fill="#2aa0d8"/><rect x="0" y="12" width="9" height="3" fill="#d6140d"/></svg>
<div class="t tr" style="left:81.3px;top:418.74px;font-size:12px;color:#1a1a1a;transform:scaleX(0.9125);transform-origin:0 0;">S2_Cutter</div>
<svg style="left:50.3px;top:436.6px" width="7" height="11" viewBox="0 0 7 11"><path d="M0.8 0.8L4.8 5L0.8 9.3Z" fill="none" stroke="#1e1e30" stroke-width="1.2"/></svg>
<svg style="left:63.3px;top:434px" width="14" height="16" viewBox="0 0 14 16"><path d="M8.5 3V8" stroke="#555" stroke-width="1"/><path d="M8.5 8.5H12.5V13.5H10" fill="none" stroke="#444" stroke-width="1"/><circle cx="8.5" cy="3" r="1.6" fill="#6a2c82"/><circle cx="8.5" cy="8.2" r="1.6" fill="#2aa0d8"/><rect x="0" y="12" width="9" height="3" fill="#d6140d"/></svg>
<div class="t tr" style="left:81.3px;top:436.74px;font-size:12px;color:#1a1a1a;transform:scaleX(0.8909);transform-origin:0 0;">S3_Splicer</div>
<svg style="left:50.3px;top:454.6px" width="7" height="11" viewBox="0 0 7 11"><path d="M0.8 0.8L4.8 5L0.8 9.3Z" fill="none" stroke="#1e1e30" stroke-width="1.2"/></svg>
<svg style="left:63.3px;top:452px" width="14" height="16" viewBox="0 0 14 16"><path d="M8.5 3V8" stroke="#555" stroke-width="1"/><path d="M8.5 8.5H12.5V13.5H10" fill="none" stroke="#444" stroke-width="1"/><circle cx="8.5" cy="3" r="1.6" fill="#6a2c82"/><circle cx="8.5" cy="8.2" r="1.6" fill="#2aa0d8"/><rect x="0" y="12" width="9" height="3" fill="#d6140d"/></svg>
<div class="t tr" style="left:81.3px;top:454.74px;font-size:12px;color:#1a1a1a;transform:scaleX(0.9230);transform-origin:0 0;">S4_WindUp</div>
<svg style="left:44.4px;top:472px" width="14" height="12" viewBox="0 0 14 12"><rect x="0" y="1" width="13" height="11" fill="#e3b96f"/><rect x="5.5" y="1" width="7" height="1.6" fill="#f7ecd4"/></svg>
<div class="t tr" style="left:62.4px;top:472.74px;font-size:12px;color:#1a1a1a;transform:scaleX(0.9736);transform-origin:0 0;">Unscheduled</div>
<svg style="left:10.5px;top:493.0px" width="8" height="8" viewBox="0 0 8 8"><path d="M6.8 0.3V6.8H0.3Z" fill="#1e1e3a"/></svg>
<svg style="left:25.200000000000003px;top:490px" width="14" height="12" viewBox="0 0 14 12"><path d="M0.5 11.5V3.5L3.5 0.5H13.5V11.5Z" fill="#e9e6e2" stroke="#e8cd9a"/><path d="M0.5 11.5L1 6H8L13.5 11.5Z" fill="#e3b96f"/></svg>
<div class="t tr" style="left:43.2px;top:490.74px;font-size:12px;color:#1a1a1a;transform:scaleX(1.0114);transform-origin:0 0;">Motion Groups</div>
<div class="a" style="left:2px;top:506px;width:304px;height:18px;background:#0a77d5"></div>
<svg style="left:29.8px;top:511.0px" width="8" height="8" viewBox="0 0 8 8"><path d="M6.8 0.3V6.8H0.3Z" fill="#fff"/></svg>
<svg style="left:44.4px;top:507px" width="16" height="15" viewBox="0 0 16 15"><path d="M0.5 12.5V3L3 0.5H13.5V12.5Z" fill="#f1e8dc" stroke="#fff" stroke-width="1"/><path d="M0.5 12.5L1 5H6L9 12.5Z" fill="#d9ab78"/><circle cx="9.8" cy="10.2" r="4.5" fill="#fff"/><circle cx="9.8" cy="10.2" r="3.7" fill="none" stroke="#2e2e2e" stroke-width="1.3" stroke-dasharray="1.598 1.308"/><circle cx="9.8" cy="10.2" r="3.0" fill="#2e2e2e"/><circle cx="9.8" cy="10.2" r="1.35" fill="#fff"/></svg>
<div class="t tr" style="left:62.4px;top:508.74px;font-size:12px;color:#e8f6ff;transform:scaleX(1.0550);transform-origin:0 0;">Motion</div>
<svg style="left:63.3px;top:526px" width="17" height="15" viewBox="0 0 17 15"><path d="M0.8 5.2L5 0.8H10.2V9.5H5Z" fill="#f4ee3a" stroke="#2e2e2e" stroke-width="1"/><circle cx="10.8" cy="9.8" r="4.5" fill="#fff"/><circle cx="10.8" cy="9.8" r="3.7" fill="none" stroke="#8e8e8e" stroke-width="1.3" stroke-dasharray="1.598 1.308"/><circle cx="10.8" cy="9.8" r="3.0" fill="#8e8e8e"/><circle cx="10.8" cy="9.8" r="1.35" fill="#d0d0d0"/></svg>
<div class="t tr" style="left:81.3px;top:526.74px;font-size:12px;color:#1a1a1a;transform:scaleX(0.9320);transform-origin:0 0;">AV_Drv_Simu_Blade_Rotation</div>
<svg style="left:63.3px;top:544px" width="17" height="15" viewBox="0 0 17 15"><path d="M0.8 5.2L5 0.8H10.2V9.5H5Z" fill="#f4ee3a" stroke="#2e2e2e" stroke-width="1"/><circle cx="10.8" cy="9.8" r="4.5" fill="#fff"/><circle cx="10.8" cy="9.8" r="3.7" fill="none" stroke="#8e8e8e" stroke-width="1.3" stroke-dasharray="1.598 1.308"/><circle cx="10.8" cy="9.8" r="3.0" fill="#8e8e8e"/><circle cx="10.8" cy="9.8" r="1.35" fill="#d0d0d0"/></svg>
<div class="t tr" style="left:81.3px;top:544.74px;font-size:12px;color:#1a1a1a;transform:scaleX(0.9432);transform-origin:0 0;">AV_Drv_Simu_Cutter_Angle</div>
<svg style="left:63.3px;top:562px" width="17" height="15" viewBox="0 0 17 15"><path d="M0.8 5.2L5 0.8H10.2V9.5H5Z" fill="#f4ee3a" stroke="#2e2e2e" stroke-width="1"/><circle cx="10.8" cy="9.8" r="4.5" fill="#fff"/><circle cx="10.8" cy="9.8" r="3.7" fill="none" stroke="#8e8e8e" stroke-width="1.3" stroke-dasharray="1.598 1.308"/><circle cx="10.8" cy="9.8" r="3.0" fill="#8e8e8e"/><circle cx="10.8" cy="9.8" r="1.35" fill="#d0d0d0"/></svg>
<div class="t tr" style="left:81.3px;top:562.74px;font-size:12px;color:#1a1a1a;transform:scaleX(0.9365);transform-origin:0 0;">AV_Drv_Simu_Cutter_Blade_Translation</div>
<svg style="left:63.3px;top:580px" width="17" height="15" viewBox="0 0 17 15"><path d="M0.8 5.2L5 0.8H10.2V9.5H5Z" fill="#f4ee3a" stroke="#2e2e2e" stroke-width="1"/><circle cx="10.8" cy="9.8" r="4.5" fill="#fff"/><circle cx="10.8" cy="9.8" r="3.7" fill="none" stroke="#8e8e8e" stroke-width="1.3" stroke-dasharray="1.598 1.308"/><circle cx="10.8" cy="9.8" r="3.0" fill="#8e8e8e"/><circle cx="10.8" cy="9.8" r="1.35" fill="#d0d0d0"/></svg>
<div class="t tr" style="left:81.3px;top:580.74px;font-size:12px;color:#1a1a1a;transform:scaleX(0.9462);transform-origin:0 0;">AV_Drv_Simu_Cutter_Conveyor</div>
<svg style="left:63.3px;top:598px" width="17" height="15" viewBox="0 0 17 15"><path d="M0.8 5.2L5 0.8H10.2V9.5H5Z" fill="#f4ee3a" stroke="#2e2e2e" stroke-width="1"/><circle cx="10.8" cy="9.8" r="4.5" fill="#fff"/><circle cx="10.8" cy="9.8" r="3.7" fill="none" stroke="#8e8e8e" stroke-width="1.3" stroke-dasharray="1.598 1.308"/><circle cx="10.8" cy="9.8" r="3.0" fill="#8e8e8e"/><circle cx="10.8" cy="9.8" r="1.35" fill="#d0d0d0"/></svg>
<div class="t tr" style="left:81.3px;top:598.74px;font-size:12px;color:#1a1a1a;transform:scaleX(0.9265);transform-origin:0 0;">AV_Drv_Simu_Slitter</div>
<svg style="left:63.3px;top:616px" width="17" height="15" viewBox="0 0 17 15"><path d="M0.8 5.2L5 0.8H10.2V9.5H5Z" fill="#f4ee3a" stroke="#2e2e2e" stroke-width="1"/><circle cx="10.8" cy="9.8" r="4.5" fill="#fff"/><circle cx="10.8" cy="9.8" r="3.7" fill="none" stroke="#8e8e8e" stroke-width="1.3" stroke-dasharray="1.598 1.308"/><circle cx="10.8" cy="9.8" r="3.0" fill="#8e8e8e"/><circle cx="10.8" cy="9.8" r="1.35" fill="#d0d0d0"/></svg>
<div class="t tr" style="left:81.3px;top:616.74px;font-size:12px;color:#1a1a1a;transform:scaleX(0.9216);transform-origin:0 0;">AV_Drv_Simu_Transfer_Splicer</div>
<svg style="left:63.3px;top:634px" width="17" height="15" viewBox="0 0 17 15"><path d="M0.8 5.2L5 0.8H10.2V9.5H5Z" fill="#f4ee3a" stroke="#2e2e2e" stroke-width="1"/><circle cx="10.8" cy="9.8" r="4.5" fill="#fff"/><circle cx="10.8" cy="9.8" r="3.7" fill="none" stroke="#8e8e8e" stroke-width="1.3" stroke-dasharray="1.598 1.308"/><circle cx="10.8" cy="9.8" r="3.0" fill="#8e8e8e"/><circle cx="10.8" cy="9.8" r="1.35" fill="#d0d0d0"/></svg>
<div class="t tr" style="left:81.3px;top:634.74px;font-size:12px;color:#1a1a1a;transform:scaleX(0.9506);transform-origin:0 0;">AV_Drv_Simu_WindupBob</div>
<svg style="left:63.3px;top:652px" width="17" height="15" viewBox="0 0 17 15"><path d="M0.8 5.2L5 0.8H10.2V9.5H5Z" fill="#f4ee3a" stroke="#2e2e2e" stroke-width="1"/><circle cx="10.8" cy="9.8" r="4.5" fill="#fff"/><circle cx="10.8" cy="9.8" r="3.7" fill="none" stroke="#2e2e2e" stroke-width="1.3" stroke-dasharray="1.598 1.308"/><circle cx="10.8" cy="9.8" r="3.0" fill="#2e2e2e"/><circle cx="10.8" cy="9.8" r="1.35" fill="#fff"/></svg>
<div class="t tr" style="left:81.3px;top:652.74px;font-size:12px;color:#1a1a1a;transform:scaleX(0.9371);transform-origin:0 0;">A_Drv_Blade_Rotation</div>
<svg style="left:63.3px;top:670px" width="17" height="15" viewBox="0 0 17 15"><path d="M0.8 5.2L5 0.8H10.2V9.5H5Z" fill="#f4ee3a" stroke="#2e2e2e" stroke-width="1"/><circle cx="10.8" cy="9.8" r="4.5" fill="#fff"/><circle cx="10.8" cy="9.8" r="3.7" fill="none" stroke="#2e2e2e" stroke-width="1.3" stroke-dasharray="1.598 1.308"/><circle cx="10.8" cy="9.8" r="3.0" fill="#2e2e2e"/><circle cx="10.8" cy="9.8" r="1.35" fill="#fff"/></svg>
<div class="t tr" style="left:81.3px;top:670.74px;font-size:12px;color:#1a1a1a;transform:scaleX(0.9340);transform-origin:0 0;">A_Drv_Blade_Translation</div>
<svg style="left:63.3px;top:688px" width="17" height="15" viewBox="0 0 17 15"><path d="M0.8 5.2L5 0.8H10.2V9.5H5Z" fill="#f4ee3a" stroke="#2e2e2e" stroke-width="1"/><circle cx="10.8" cy="9.8" r="4.5" fill="#fff"/><circle cx="10.8" cy="9.8" r="3.7" fill="none" stroke="#2e2e2e" stroke-width="1.3" stroke-dasharray="1.598 1.308"/><circle cx="10.8" cy="9.8" r="3.0" fill="#2e2e2e"/><circle cx="10.8" cy="9.8" r="1.35" fill="#fff"/></svg>
<div class="t tr" style="left:81.3px;top:688.74px;font-size:12px;color:#1a1a1a;transform:scaleX(0.9504);transform-origin:0 0;">A_Drv_Cutter_Angle</div>
<svg style="left:63.3px;top:706px" width="17" height="15" viewBox="0 0 17 15"><path d="M0.8 5.2L5 0.8H10.2V9.5H5Z" fill="#f4ee3a" stroke="#2e2e2e" stroke-width="1"/><circle cx="10.8" cy="9.8" r="4.5" fill="#fff"/><circle cx="10.8" cy="9.8" r="3.7" fill="none" stroke="#2e2e2e" stroke-width="1.3" stroke-dasharray="1.598 1.308"/><circle cx="10.8" cy="9.8" r="3.0" fill="#2e2e2e"/><circle cx="10.8" cy="9.8" r="1.35" fill="#fff"/></svg>
<div class="t tr" style="left:81.3px;top:706.74px;font-size:12px;color:#1a1a1a;transform:scaleX(0.9532);transform-origin:0 0;">A_Drv_Cutter_Conveyor</div>
<svg style="left:63.3px;top:724px" width="17" height="15" viewBox="0 0 17 15"><path d="M0.8 5.2L5 0.8H10.2V9.5H5Z" fill="#f4ee3a" stroke="#2e2e2e" stroke-width="1"/><circle cx="10.8" cy="9.8" r="4.5" fill="#fff"/><circle cx="10.8" cy="9.8" r="3.7" fill="none" stroke="#2e2e2e" stroke-width="1.3" stroke-dasharray="1.598 1.308"/><circle cx="10.8" cy="9.8" r="3.0" fill="#2e2e2e"/><circle cx="10.8" cy="9.8" r="1.35" fill="#fff"/></svg>
<div class="t tr" style="left:81.3px;top:724.74px;font-size:12px;color:#1a1a1a;transform:scaleX(0.9280);transform-origin:0 0;">A_Drv_Slitter</div>
<svg style="left:63.3px;top:742px" width="17" height="15" viewBox="0 0 17 15"><path d="M0.8 5.2L5 0.8H10.2V9.5H5Z" fill="#f4ee3a" stroke="#2e2e2e" stroke-width="1"/><circle cx="10.8" cy="9.8" r="4.5" fill="#fff"/><circle cx="10.8" cy="9.8" r="3.7" fill="none" stroke="#2e2e2e" stroke-width="1.3" stroke-dasharray="1.598 1.308"/><circle cx="10.8" cy="9.8" r="3.0" fill="#2e2e2e"/><circle cx="10.8" cy="9.8" r="1.35" fill="#fff"/></svg>
<div class="t tr" style="left:81.3px;top:742.74px;font-size:12px;color:#1a1a1a;transform:scaleX(0.9139);transform-origin:0 0;">A_Power_Head_Gr1</div>
<svg style="left:63.3px;top:760px" width="17" height="15" viewBox="0 0 17 15"><path d="M0.8 5.2L5 0.8H10.2V9.5H5Z" fill="#f4ee3a" stroke="#2e2e2e" stroke-width="1"/><circle cx="10.8" cy="9.8" r="4.5" fill="#fff"/><circle cx="10.8" cy="9.8" r="3.7" fill="none" stroke="#2e2e2e" stroke-width="1.3" stroke-dasharray="1.598 1.308"/><circle cx="10.8" cy="9.8" r="3.0" fill="#2e2e2e"/><circle cx="10.8" cy="9.8" r="1.35" fill="#fff"/></svg>
<div class="t tr" style="left:81.3px;top:760.74px;font-size:12px;color:#1a1a1a;transform:scaleX(0.9203);transform-origin:0 0;">A_Power_Head_Gr2</div>
<svg style="left:29.8px;top:781.0px" width="8" height="8" viewBox="0 0 8 8"><path d="M6.8 0.3V6.8H0.3Z" fill="#1e1e3a"/></svg>
<svg style="left:44.4px;top:778px" width="14" height="12" viewBox="0 0 14 12"><path d="M0.5 11.5V3.5L3.5 0.5H13.5V11.5Z" fill="#e9e6e2" stroke="#e8cd9a"/><path d="M0.5 11.5L1 6H8L13.5 11.5Z" fill="#e3b96f"/></svg>
<div class="t tr" style="left:62.4px;top:778.74px;font-size:12px;color:#1a1a1a;transform:scaleX(0.9643);transform-origin:0 0;">Ungrouped Axes</div>
<svg style="left:63.3px;top:796px" width="17" height="15" viewBox="0 0 17 15"><path d="M0.8 5.2L5 0.8H10.2V9.5H5Z" fill="#f4ee3a" stroke="#2e2e2e" stroke-width="1"/><circle cx="10.8" cy="9.8" r="4.5" fill="#fff"/><circle cx="10.8" cy="9.8" r="3.7" fill="none" stroke="#2e2e2e" stroke-width="1.3" stroke-dasharray="1.598 1.308"/><circle cx="10.8" cy="9.8" r="3.0" fill="#2e2e2e"/><circle cx="10.8" cy="9.8" r="1.35" fill="#fff"/></svg>
<div class="t tr" style="left:81.3px;top:796.74px;font-size:12px;color:#1a1a1a;transform:scaleX(0.9232);transform-origin:0 0;">A_Drv_Transfer_Splicer</div>
<svg style="left:63.3px;top:814px" width="17" height="15" viewBox="0 0 17 15"><path d="M0.8 5.2L5 0.8H10.2V9.5H5Z" fill="#f4ee3a" stroke="#2e2e2e" stroke-width="1"/><circle cx="10.8" cy="9.8" r="4.5" fill="#fff"/><circle cx="10.8" cy="9.8" r="3.7" fill="none" stroke="#2e2e2e" stroke-width="1.3" stroke-dasharray="1.598 1.308"/><circle cx="10.8" cy="9.8" r="3.0" fill="#2e2e2e"/><circle cx="10.8" cy="9.8" r="1.35" fill="#fff"/></svg>
<div class="t tr" style="left:81.3px;top:814.74px;font-size:12px;color:#1a1a1a;transform:scaleX(0.9652);transform-origin:0 0;">A_Drv_WindupBob</div>
<svg style="left:63.3px;top:832px" width="17" height="15" viewBox="0 0 17 15"><path d="M0.8 5.2L5 0.8H10.2V9.5H5Z" fill="#f4ee3a" stroke="#2e2e2e" stroke-width="1"/><circle cx="10.8" cy="9.8" r="4.5" fill="#fff"/><circle cx="10.8" cy="9.8" r="3.7" fill="none" stroke="#2e2e2e" stroke-width="1.3" stroke-dasharray="1.598 1.308"/><circle cx="10.8" cy="9.8" r="3.0" fill="#2e2e2e"/><circle cx="10.8" cy="9.8" r="1.35" fill="#fff"/></svg>
<div class="t tr" style="left:81.3px;top:832.74px;font-size:12px;color:#1a1a1a;transform:scaleX(0.9665);transform-origin:0 0;">A_Drv_WindUpLength</div>
<svg style="left:12.0px;top:850.6px" width="7" height="11" viewBox="0 0 7 11"><path d="M0.8 0.8L4.8 5L0.8 9.3Z" fill="none" stroke="#1e1e30" stroke-width="1.2"/></svg>
<svg style="left:25.200000000000003px;top:850px" width="14" height="12" viewBox="0 0 14 12"><rect x="0" y="1" width="13" height="11" fill="#e3b96f"/><rect x="5.5" y="1" width="7" height="1.6" fill="#f7ecd4"/></svg>
<div class="t tr" style="left:43.2px;top:850.74px;font-size:12px;color:#1a1a1a;transform:scaleX(0.9972);transform-origin:0 0;">Alarm Manager</div>
<svg style="left:12.0px;top:868.6px" width="7" height="11" viewBox="0 0 7 11"><path d="M0.8 0.8L4.8 5L0.8 9.3Z" fill="none" stroke="#1e1e30" stroke-width="1.2"/></svg>
<svg style="left:25.200000000000003px;top:868px" width="14" height="12" viewBox="0 0 14 12"><rect x="0" y="1" width="13" height="11" fill="#e3b96f"/><rect x="5.5" y="1" width="7" height="1.6" fill="#f7ecd4"/></svg>
<div class="t tr" style="left:43.2px;top:868.74px;font-size:12px;color:#1a1a1a;transform:scaleX(0.9080);transform-origin:0 0;">Assets</div>
<svg style="left:25.200000000000003px;top:884px" width="16" height="16" viewBox="0 0 16 16"><path d="M2 2V15M2 6H6V15M6 10H10V15M10 13.5H13" fill="none" stroke="#1a1a1a" stroke-width="1.2" stroke-dasharray="1.2 0.8"/><rect x="0.5" y="0" width="4" height="2.5" fill="#26809a"/><rect x="4.5" y="4.5" width="4" height="2.5" fill="#26809a"/><rect x="8.5" y="8.5" width="4" height="2.5" fill="#26809a"/><rect x="11" y="12" width="4.5" height="3" fill="#26809a"/></svg>
<div class="t tr" style="left:43.2px;top:886.74px;font-size:12px;color:#1a1a1a;transform:scaleX(1.0061);transform-origin:0 0;">Logical Model</div>
<svg style="left:10.5px;top:907.0px" width="8" height="8" viewBox="0 0 8 8"><path d="M6.8 0.3V6.8H0.3Z" fill="#1e1e3a"/></svg>
<svg style="left:25.200000000000003px;top:904px" width="14" height="12" viewBox="0 0 14 12"><path d="M0.5 11.5V3.5L3.5 0.5H13.5V11.5Z" fill="#e9e6e2" stroke="#e8cd9a"/><path d="M0.5 11.5L1 6H8L13.5 11.5Z" fill="#e3b96f"/></svg>
<div class="t tr" style="left:43.2px;top:904.74px;font-size:12px;color:#1a1a1a;transform:scaleX(1.0307);transform-origin:0 0;">I/O Configuration</div>
<svg style="left:29.8px;top:925.0px" width="8" height="8" viewBox="0 0 8 8"><path d="M6.8 0.3V6.8H0.3Z" fill="#1e1e3a"/></svg>
<svg style="left:44.4px;top:923px" width="16" height="10" viewBox="0 0 16 10"><rect x="0.5" y="0.5" width="15" height="9" rx="1.5" fill="#1e1e1e"/><rect x="2.5" y="3" width="11" height="3" fill="#888"/><path d="M3 3V6M5 3V6M7 3V6M9 3V6M11 3V6" stroke="#1e1e1e" stroke-width="0.8"/></svg>
<div class="t tr" style="left:62.4px;top:922.74px;font-size:12px;color:#1a1a1a;transform:scaleX(0.9355);transform-origin:0 0;">1756 Backplane, 1756-A4</div>
<svg style="left:63.3px;top:939px" width="11" height="14" viewBox="0 0 11 14"><rect x="0.5" y="0.5" width="9" height="12" fill="#fff" stroke="#444"/><rect x="0" y="1" width="1.6" height="12" fill="#c8281e"/><rect x="3" y="3.5" width="6" height="6" fill="#fff" stroke="#444"/><path d="M7.5 5L5 6.5L7.5 8" fill="none" stroke="#444"/></svg>
<div class="t tr" style="left:81.3px;top:940.74px;font-size:12px;color:#1a1a1a;transform:scaleX(0.9209);transform-origin:0 0;">[0] 1756-L83ES Banner</div>
<svg style="left:63.3px;top:958px" width="10" height="12" viewBox="0 0 10 12"><rect x="0.5" y="0.5" width="8" height="11" fill="#2a2a2a"/><rect x="3" y="2" width="4" height="4" fill="#e3342a"/></svg>
<div class="t tr" style="left:81.3px;top:958.74px;font-size:12px;color:#1a1a1a;transform:scaleX(0.9620);transform-origin:0 0;">[1] 1756-L8SP BannerPartner</div>
</div><div class="a" style="left:0px;top:989px;width:326px;height:24px;background:#4b5f83"></div>
<div class="a" style="left:0px;top:990px;width:133px;height:23px;background:#fbfbfc"></div>
<svg style="left:4px;top:992px" width="14" height="16" viewBox="0 0 14 16"><path d="M2 1.5V14.5M0.5 1.5H4M0.5 14.5H4" fill="none" stroke="#1f3550" stroke-width="1.3"/><path d="M5 4.5H8V11.5H5M9.5 7H13M9.5 9.5H13" fill="none" stroke="#1f3550" stroke-width="1.2"/><rect x="4" y="0.5" width="3" height="2" fill="#1f6fb0"/><rect x="8" y="12.5" width="3" height="2" fill="#1f6fb0"/></svg>
<div class="t" style="left:21px;top:995.76px;font-size:11.5px;color:#1c6aa8;transform:scaleX(1.0238);transform-origin:0 0;">Controller Organizer</div>
<svg style="left:138px;top:992px" width="16" height="17" viewBox="0 0 16 17"><path d="M2 1V16M2 5H6V16M6 9H10V16M10 13H15" fill="none" stroke="#f0f0f0" stroke-width="1" stroke-dasharray="1 1"/><rect x="0.5" y="0.5" width="3" height="2.5" fill="none" stroke="#f0f0f0"/><rect x="4.5" y="4.5" width="3" height="2.5" fill="none" stroke="#f0f0f0"/><rect x="8.5" y="8.5" width="3" height="2.5" fill="none" stroke="#f0f0f0"/><rect x="11.5" y="12.5" width="4" height="3" fill="none" stroke="#f0f0f0"/></svg>
<div class="t" style="left:156px;top:995.76px;font-size:11.5px;color:#e6ecf6;transform:scaleX(0.9986);transform-origin:0 0;">Logical Organizer</div>
<div class="a" style="left:326px;top:133px;width:1591px;height:880px;background:#293a56"></div>
<svg style="left:338px;top:137px" width="17" height="17" viewBox="0 0 17 17"><rect x="1.2" y="0.7" width="6" height="4.6" fill="none" stroke="#2a2ae0" stroke-width="1.4"/><path d="M4.2 5.3V11M4.2 7.8H13.5V10.5" fill="none" stroke="#f0f0f8" stroke-width="1.1"/><path d="M11.8 9.5L13.5 11L15.2 9.5" fill="none" stroke="#f0f0f8" stroke-width="0.9"/><rect x="1.2" y="11.2" width="6" height="5" fill="none" stroke="#2a2ae0" stroke-width="1.4"/><rect x="10.4" y="11.2" width="6" height="5" fill="#58c858" stroke="#f0f0f8" stroke-width="1.2"/></svg>
<div class="t" style="left:356px;top:140.01px;font-size:11.8px;color:#f2f4f8;transform:scaleX(0.9229);transform-origin:0 0;">P02_Cutter - R100_G_CutterProd</div>
<div class="a" style="left:527px;top:135px;width:238px;height:21px;background:#e8edf8"></div>
<svg style="left:532px;top:138px" width="15" height="15" viewBox="0 0 15 15"><rect x="0.6" y="0.6" width="4.8" height="3.8" fill="none" stroke="#1a1ab4" stroke-width="1.2"/><path d="M3 4.4V9.5M3 6.8H11.5V9" fill="none" stroke="#1a1ab4" stroke-width="1"/><path d="M10 8.5L11.5 10L13 8.5" fill="none" stroke="#1a1ab4" stroke-width="0.9"/><rect x="0.6" y="9.4" width="4.8" height="4.4" fill="none" stroke="#1a1ab4" stroke-width="1.2"/><rect x="9.1" y="9.4" width="4.8" height="4.4" fill="none" stroke="#3aa83a" stroke-width="1.2"/></svg>
<div class="t" style="left:549px;top:139.71px;font-size:11.8px;color:#111;font-weight:bold;transform:scaleX(0.9030);transform-origin:0 0;">P01_LetOff - R100_G_LetOff1Loading</div>
<svg style="left:751px;top:142px" width="10" height="9" viewBox="0 0 10 9"><path d="M1 1L8.5 8M8.5 1L1 8" stroke="#555" stroke-width="1.4"/></svg>
<svg style="left:1900px;top:142px" width="12" height="8" viewBox="0 0 12 8"><path d="M0.5 0.5H11.5L6 6.5Z" fill="#fff"/></svg>
<div class="a" style="left:332px;top:156px;width:1585px;height:857px;background:#d6dbe9"></div>
<div class="a" style="left:332px;top:156px;width:273px;height:26px;background:#d3d9e8"></div>
<svg style="left:337px;top:159px" width="5" height="22"><defs><pattern id="gp6" width="4" height="4" patternUnits="userSpaceOnUse"><rect x="0" y="0" width="1" height="1" fill="#3a3f4a"/><rect x="2" y="2" width="1" height="1" fill="#3a3f4a"/></pattern></defs><rect width="5" height="22" fill="url(#gp6)"/></svg>
<div class="a" style="left:332px;top:182px;width:1585px;height:1px;background:#b9c0d2"></div>
<div class="a" style="left:332px;top:185px;width:1585px;height:1px;background:#c4cad9"></div>
<div class="a" style="left:332px;top:188px;width:1585px;height:1px;background:#b9c0d2"></div>
<svg style="left:348px;top:161px" width="15" height="15" viewBox="0 0 15 15"><circle cx="6" cy="6" r="4.6" fill="#fff" stroke="#2b2b2b" stroke-width="1.5"/><path d="M3.2 6H8.8M6 3.2V8.8" stroke="#1a5f8a" stroke-width="1.5"/><path d="M9.5 9.5L13.5 13.5" stroke="#2b2b2b" stroke-width="2.4"/></svg>
<svg style="left:370px;top:161px" width="15" height="15" viewBox="0 0 15 15"><circle cx="6" cy="6" r="4.6" fill="#fff" stroke="#2b2b2b" stroke-width="1.5"/><path d="M3.2 6H8.8" stroke="#1a5f8a" stroke-width="1.5"/><path d="M9.5 9.5L13.5 13.5" stroke="#2b2b2b" stroke-width="2.4"/></svg>
<div class="a" style="left:392px;top:160px;width:1px;height:21px;background:#b9c0d2"></div>
<svg style="left:400px;top:162px" width="13" height="14" viewBox="0 0 13 14"><path d="M0.5 0.5H7.5L11.5 4.5V13.5H0.5Z" fill="#f6f6f6" stroke="#9a9a9a"/><path d="M3 6H9M3 8.5H9M3 11H9" stroke="#a0a0a0"/></svg>
<svg style="left:420px;top:161px" width="14" height="15" viewBox="0 0 14 15"><path d="M3.5 1.5H9.5L13.5 5.5V14.5H3.5Z" fill="#f6f6f6" stroke="#9a9a9a"/><path d="M1 3H4M1 6H4M1 9H4M6 7H11M6 9.5H11M6 12H11" stroke="#a0a0a0"/><path d="M1 11L3 13" stroke="#a0a0a0"/></svg>
<svg style="left:444px;top:162px" width="14" height="14" viewBox="0 0 14 14"><path d="M0.5 0.5H7.5L10.5 3.5V13.5H0.5Z" fill="#f6f6f6" stroke="#9a9a9a"/><path d="M2.5 5H6M2.5 7.5H6M2.5 10H6" stroke="#a0a0a0"/><path d="M8 6V9L6 13.5H13L11 9V6Z" fill="#d8d8d8" stroke="#9a9a9a"/></svg>
<div class="a" style="left:467px;top:160px;width:1px;height:21px;background:#b9c0d2"></div>
<svg style="left:473px;top:161px" width="16" height="15" viewBox="0 0 16 15"><circle cx="5" cy="6" r="4.2" fill="#fff" stroke="#333" stroke-width="1.2"/><path d="M3 5L5 7.5L7 5" fill="#1a8fd0"/><path d="M7.5 9L10 12" stroke="#333" stroke-width="2"/><path d="M9 1H13V4M11 4V10H14M11 7H14" stroke="#1a6fb0" stroke-width="1" fill="none"/><circle cx="13.5" cy="10.5" r="1.8" fill="#1a8fd0"/></svg>
<div class="a" style="left:497px;top:160px;width:1px;height:21px;background:#b9c0d2"></div>
<div class="a" style="left:499.5px;top:159px;width:21px;height:21px;background:#fde9b0;border:1px solid #f3d27f"></div>
<svg style="left:503px;top:163px" width="14" height="13" viewBox="0 0 14 13"><rect x="0.8" y="0.8" width="12" height="11" fill="#fff" stroke="#333" stroke-width="1.4"/><g fill="#bbb"><rect x="3" y="3" width="1" height="1"/><rect x="5" y="3" width="1" height="1"/><rect x="7" y="3" width="1" height="1"/><rect x="9" y="3" width="1" height="1"/><rect x="3" y="5" width="1" height="1"/><rect x="5" y="5" width="1" height="1"/><rect x="7" y="5" width="1" height="1"/><rect x="9" y="5" width="1" height="1"/><rect x="3" y="7" width="1" height="1"/><rect x="5" y="7" width="1" height="1"/><rect x="7" y="7" width="1" height="1"/><rect x="9" y="7" width="1" height="1"/><rect x="3" y="9" width="1" height="1"/><rect x="5" y="9" width="1" height="1"/><rect x="7" y="9" width="1" height="1"/><rect x="9" y="9" width="1" height="1"/></g></svg>
<div class="a" style="left:521.5px;top:159px;width:22px;height:21px;background:#fde9b0;border:1px solid #f3d27f"></div>
<svg style="left:525px;top:163px" width="15" height="13" viewBox="0 0 15 13"><rect x="0.8" y="0.8" width="13" height="11" fill="#fff" stroke="#333" stroke-width="1.4"/><rect x="2.5" y="2.5" width="9.5" height="7.5" fill="#e9e9e9" stroke="#bbb" stroke-width="0.8"/></svg>
<div class="a" style="left:550px;top:160px;width:1px;height:21px;background:#b9c0d2"></div>
<svg style="left:555px;top:162px" width="16" height="15" viewBox="0 0 16 15"><rect x="0.8" y="0.8" width="6" height="4.5" fill="#fff" stroke="#333" stroke-width="1.2"/><path d="M3.8 5.3V8M0.8 8H6.8" stroke="#333" stroke-width="1.1"/><rect x="0.8" y="9" width="6" height="4.5" fill="#dff5d0" stroke="#3aa83a" stroke-width="1.2"/><path d="M11 1V10" stroke="#333" stroke-dasharray="1 1"/><path d="M8.5 10H13.5L11 13Z" fill="#333"/></svg>
<div class="a" style="left:578px;top:160px;width:1px;height:21px;background:#b9c0d2"></div>
<svg style="left:584px;top:162px" width="17" height="15" viewBox="0 0 17 15"><rect x="5.5" y="0.8" width="6" height="4.5" fill="#f4f4f4" stroke="#9a9a9a" stroke-width="1.1"/><path d="M8.5 5.3V8M1.5 8H15.5M2.5 8V13M14.5 8V13M0.5 11H4.5M12.5 11H16.5" stroke="#9a9a9a" stroke-width="1.1"/></svg>
<div class="a" style="left:334px;top:189px;width:1583px;height:804px;background:#f0f0f0;border-left:1px solid #c5cad8;border-top:1px solid #c5cad8"></div>
<div class="a" style="left:364px;top:205px;width:1535px;height:787px;background:#fff"></div>
<div class="t" style="left:376.1px;width:40px;text-align:center;top:194.97px;font-size:7.6px;color:#8a8a8a">B</div>
<div class="t" style="left:515.6600000000001px;width:40px;text-align:center;top:194.97px;font-size:7.6px;color:#8a8a8a">C</div>
<div class="t" style="left:655.22px;width:40px;text-align:center;top:194.97px;font-size:7.6px;color:#8a8a8a">D</div>
<div class="t" style="left:794.78px;width:40px;text-align:center;top:194.97px;font-size:7.6px;color:#8a8a8a">E</div>
<div class="t" style="left:934.34px;width:40px;text-align:center;top:194.97px;font-size:7.6px;color:#8a8a8a">F</div>
<div class="t" style="left:1073.9px;width:40px;text-align:center;top:194.97px;font-size:7.6px;color:#8a8a8a">G</div>
<div class="t" style="left:1213.46px;width:40px;text-align:center;top:194.97px;font-size:7.6px;color:#8a8a8a">H</div>
<div class="t" style="left:1353.02px;width:40px;text-align:center;top:194.97px;font-size:7.6px;color:#8a8a8a">I</div>
<div class="t" style="left:1492.58px;width:40px;text-align:center;top:194.97px;font-size:7.6px;color:#8a8a8a">J</div>
<div class="t" style="left:1632.1399999999999px;width:40px;text-align:center;top:194.97px;font-size:7.6px;color:#8a8a8a">K</div>
<div class="t" style="left:1771.6999999999998px;width:40px;text-align:center;top:194.97px;font-size:7.6px;color:#8a8a8a">L</div>
<div class="t" style="left:331px;width:40px;text-align:center;top:272.27px;font-size:7.6px;color:#8a8a8a">1</div>
<div class="t" style="left:331px;width:40px;text-align:center;top:411.87px;font-size:7.6px;color:#8a8a8a">2</div>
<div class="t" style="left:331px;width:40px;text-align:center;top:551.47px;font-size:7.6px;color:#8a8a8a">3</div>
<div class="t" style="left:331px;width:40px;text-align:center;top:691.07px;font-size:7.6px;color:#8a8a8a">4</div>
<div class="t" style="left:331px;width:40px;text-align:center;top:830.67px;font-size:7.6px;color:#8a8a8a">5</div>
<div class="t" style="left:331px;width:40px;text-align:center;top:970.27px;font-size:7.6px;color:#8a8a8a">6</div>
<svg style="left:0;top:0" width="1917" height="1032"><g stroke="#ebebeb" stroke-width="1" stroke-dasharray="2.5 3.5" fill="none"><path d="M466.8 205V992" /><path d="M606.36 205V992" /><path d="M745.9200000000001 205V992" /><path d="M885.48 205V992" /><path d="M1025.04 205V992" /><path d="M1164.6 205V992" /><path d="M1304.16 205V992" /><path d="M1443.72 205V992" /><path d="M1583.28 205V992" /><path d="M1722.84 205V992" /><path d="M1862.3999999999999 205V992" /><path d="M364 345.3H1899" /><path d="M364 484.86H1899" /><path d="M364 624.4200000000001H1899" /><path d="M364 763.98H1899" /><path d="M364 903.54H1899" /></g></svg>
<div class="a" style="left:996.85px;top:205px;width:1.3px;height:787px;background:#8f8f8f"></div>
<div class="a" style="left:1805.85px;top:205px;width:1.3px;height:787px;background:#8f8f8f"></div>
<div class="a" style="left:403.3px;top:275.1px;width:91.30000000000001px;height:1px;background:#a3a3a3"></div>
<div class="a" style="left:403.3px;top:275.1px;width:1px;height:530.1999999999999px;background:#a3a3a3"></div>
<div class="a" style="left:403.3px;top:804.3px;width:91.69999999999999px;height:1px;background:#a3a3a3"></div>
<div class="a" style="left:494.0px;top:275.1px;width:1px;height:11.899999999999977px;background:#a3a3a3"></div>
<div class="a" style="left:494.0px;top:329px;width:1px;height:31px;background:#a3a3a3"></div>
<div class="a" style="left:487.4px;top:359.7px;width:1411.6px;height:1px;background:#a3a3a3"></div>
<div class="a" style="left:487.4px;top:630.8px;width:1411.6px;height:1px;background:#a3a3a3"></div>
<div class="a" style="left:494.0px;top:360px;width:1px;height:271.29999999999995px;background:#a3a3a3"></div>
<div class="a" style="left:983.0px;top:360px;width:1px;height:271.29999999999995px;background:#a3a3a3"></div>
<div class="a" style="left:1513.0px;top:360px;width:1px;height:271.29999999999995px;background:#a3a3a3"></div>
<div class="a" style="left:494.0px;top:631px;width:1px;height:50px;background:#a3a3a3"></div>
<div class="a" style="left:494.0px;top:713px;width:1px;height:92px;background:#a3a3a3"></div>
<svg style="left:490.5px;top:284.0px" width="8" height="6" viewBox="0 0 8 6"><path d="M0.5 5.2V2.8L3.7 0.5L6.9 2.8V5.2Z" fill="#fff" stroke="#a3a3a3" stroke-width="1"/></svg>
<div class="a" style="left:415.5px;top:289.5px;width:158.0px;height:39.2px;border:1px solid #a3a3a3;background:#fff"></div>
<div class="a" style="left:417.5px;top:291.7px;width:154.0px;height:34.9px;border:3px solid #1fe01f;background:#fff"></div>
<svg style="left:421.7px;top:295.7px" width="12" height="12" viewBox="0 0 12 12"><circle cx="6" cy="6" r="4.8" fill="#fff" stroke="#bdbdbd" stroke-width="0.9"/><path d="M4 8.6H8" stroke="#444" stroke-width="0.9" stroke-dasharray="1 0.6"/></svg>
<div class="t tn" style="left:434px;top:312.82px;font-size:8.6px;color:#111;transform:scaleX(0.7530);transform-origin:0 0;">R100_LetOff1.SFC_LetOff1Loading.GE[0]</div>
<svg style="left:490.5px;top:327.8px" width="8" height="6" viewBox="0 0 8 6"><path d="M0.5 0.5H6.9V2.6L3.7 5L0.5 2.6Z" fill="#fff" stroke="#a3a3a3" stroke-width="1"/></svg>
<div class="a" style="left:579.9px;top:301.0px;width:14.100000000000023px;height:1px;background:#a3a3a3"></div>
<svg style="left:572.9px;top:297.5px" width="8" height="8" viewBox="0 0 8 8"><circle cx="4" cy="4" r="3.2" fill="#fff" stroke="#c0c0c0" stroke-width="0.8"/><path d="M2.5 3.3H5.5M2.5 4.9H5.5" stroke="#c0c0c0" stroke-width="0.6"/></svg>
<div class="a" style="left:594px;top:289.5px;width:615.5px;height:55px;border:1px solid #a3a3a3;background:#fff"></div>
<div class="a" style="left:595px;top:290.5px;width:613.5px;height:12.5px;background:#e8e8e8"></div>
<div class="a" style="left:608.5px;top:290.5px;width:1px;height:12.5px;background:#cfcfcf"></div>
<div class="t" style="left:597px;top:292.22px;font-size:8.6px;color:#222;">P1</div>
<div class="t tn" style="left:621px;top:292.22px;font-size:8.6px;color:#111;transform:scaleX(0.7624);transform-origin:0 0;">R100_LetOff1.SFC_LetOff1Loading.GA[0]</div>
<svg style="left:1197.5px;top:291.5px" width="11" height="11" viewBox="0 0 11 11"><circle cx="5" cy="5" r="4.6" fill="#fff" stroke="#c8c8c8" stroke-width="0.9"/><path d="M3.2 7.6H6.8" stroke="#444" stroke-width="0.9" stroke-dasharray="1 0.6"/></svg>
<div class="t m" style="left:594.2px;top:306.17px;font-size:8.27px"><span style="color:#1c1cc8">If</span><span style="color:#111">&nbsp;</span><span style="color:#801818">R100_LetOff1.SFC_LetOff1Loading.V_Active_Step_Number</span><span style="color:#111">&nbsp;</span><span style="color:#111">&gt;</span><span style="color:#111">&nbsp;</span><span style="color:#111">0</span></div>
<div class="t m" style="left:594.2px;top:318.37px;font-size:8.27px"><span style="color:#1c1cc8">then</span><span style="color:#111">&nbsp;</span><span style="color:#1c1cc8">SFR</span><span style="color:#111">&nbsp;(</span><span style="color:#801818">R100_G_LetOff1Loading</span><span style="color:#111">,</span><span style="color:#801818">R100_LetOff1.SFC_LetOff1Loading.GE[R100_LetOff1.SFC_LetOff1Loading.V_Active_Step_Number]</span><span style="color:#111">);</span></div>
<div class="t m" style="left:594.2px;top:330.57px;font-size:8.27px"><span style="color:#1c1cc8">end_if;</span></div>
<svg style="left:490.5px;top:381.09999999999997px" width="8" height="6" viewBox="0 0 8 6"><path d="M0.5 5.2V2.8L3.7 0.5L6.9 2.8V5.2Z" fill="#fff" stroke="#a3a3a3" stroke-width="1"/></svg>
<div class="a" style="left:473.2px;top:403.9px;width:41.599999999999966px;height:1px;background:#a3a3a3"></div>
<svg style="left:476.3px;top:390.9px" width="12" height="12" viewBox="0 0 12 12"><circle cx="6" cy="6" r="4.8" fill="#fff" stroke="#bdbdbd" stroke-width="0.9"/><path d="M4 8.6H8" stroke="#444" stroke-width="0.9" stroke-dasharray="1 0.6"/></svg>
<div class="t tn" style="left:509.1px;top:392.42px;font-size:8.6px;color:#111;transform:scaleX(0.7553);transform-origin:0 0;">R100_LetOff1.SFC_LetOff1Loading.GT[0]</div>
<svg style="left:490.5px;top:420.7px" width="8" height="6" viewBox="0 0 8 6"><path d="M0.5 0.5H6.9V2.6L3.7 5L0.5 2.6Z" fill="#fff" stroke="#a3a3a3" stroke-width="1"/></svg>
<div class="t m" style="left:499.3px;top:408.77px;font-size:8.27px"><span style="color:#801818">R050_B_LetOff1_ManualMode</span></div>
<div class="t m" style="left:499.3px;top:420.77px;font-size:8.27px"><span style="color:#111">&amp;</span><span style="color:#111">&nbsp;</span><span style="color:#801818">I_PU1a_AutoStart</span></div>
<div class="t m" style="left:499.3px;top:432.77px;font-size:8.27px"><span style="color:#111">&amp;</span><span style="color:#111">&nbsp;</span><span style="color:#801818">R100_LetOff1.I.SelectBobbin</span></div>
<svg style="left:490.5px;top:464.9px" width="8" height="6" viewBox="0 0 8 6"><path d="M0.5 5.2V2.8L3.7 0.5L6.9 2.8V5.2Z" fill="#fff" stroke="#a3a3a3" stroke-width="1"/></svg>
<div class="a" style="left:418.3px;top:470.4px;width:152.49999999999994px;height:34px;border:1px solid #a3a3a3;background:#fff"></div>
<svg style="left:421.40000000000003px;top:473.79999999999995px" width="12" height="12" viewBox="0 0 12 12"><circle cx="6" cy="6" r="4.8" fill="#fff" stroke="#bdbdbd" stroke-width="0.9"/><path d="M4 8.6H8" stroke="#444" stroke-width="0.9" stroke-dasharray="1 0.6"/></svg>
<div class="t tn" style="left:434.2px;top:490.62px;font-size:8.6px;color:#111;transform:scaleX(0.7530);transform-origin:0 0;">R100_LetOff1.SFC_LetOff1Loading.GE[1]</div>
<svg style="left:490.5px;top:503.9px" width="8" height="6" viewBox="0 0 8 6"><path d="M0.5 0.5H6.9V2.6L3.7 5L0.5 2.6Z" fill="#fff" stroke="#a3a3a3" stroke-width="1"/></svg>
<div class="a" style="left:577.7px;top:480.0px;width:13.699999999999932px;height:1px;background:#a3a3a3"></div>
<svg style="left:570.7px;top:476.5px" width="8" height="8" viewBox="0 0 8 8"><circle cx="4" cy="4" r="3.2" fill="#fff" stroke="#c0c0c0" stroke-width="0.8"/><path d="M2.5 3.3H5.5M2.5 4.9H5.5" stroke="#c0c0c0" stroke-width="0.6"/></svg>
<div class="a" style="left:591.4px;top:470.4px;width:296px;height:27.2px;border:1px solid #a3a3a3;background:#fff"></div>
<div class="a" style="left:592.4px;top:471.4px;width:294px;height:12.5px;background:#e8e8e8"></div>
<div class="a" style="left:605.9px;top:471.4px;width:1px;height:12.5px;background:#cfcfcf"></div>
<div class="t" style="left:594.4px;top:473.12px;font-size:8.6px;color:#222;">N</div>
<div class="t tn" style="left:618.4px;top:473.12px;font-size:8.6px;color:#111;transform:scaleX(0.7624);transform-origin:0 0;">R100_LetOff1.SFC_LetOff1Loading.GA[1]</div>
<svg style="left:875.4px;top:472.4px" width="11" height="11" viewBox="0 0 11 11"><circle cx="5" cy="5" r="4.6" fill="#fff" stroke="#c8c8c8" stroke-width="0.9"/><path d="M3.2 7.6H6.8" stroke="#444" stroke-width="0.9" stroke-dasharray="1 0.6"/></svg>
<div class="t m" style="left:591.6px;top:487.07px;font-size:8.27px"><span style="color:#801818">R100_LetOff1.SFC_LetOff1Loading.V_Active_Step_Number</span><span style="color:#111">&nbsp;</span><span style="color:#111">:=</span><span style="color:#111">&nbsp;</span><span style="color:#111">1;</span></div>
<svg style="left:490.5px;top:521.3000000000001px" width="8" height="6" viewBox="0 0 8 6"><path d="M0.5 5.2V2.8L3.7 0.5L6.9 2.8V5.2Z" fill="#fff" stroke="#a3a3a3" stroke-width="1"/></svg>
<div class="a" style="left:473.2px;top:544.1px;width:41.599999999999966px;height:1px;background:#a3a3a3"></div>
<svg style="left:476.3px;top:531.1px" width="12" height="12" viewBox="0 0 12 12"><circle cx="6" cy="6" r="4.8" fill="#fff" stroke="#bdbdbd" stroke-width="0.9"/><path d="M4 8.6H8" stroke="#444" stroke-width="0.9" stroke-dasharray="1 0.6"/></svg>
<div class="t tn" style="left:509.1px;top:532.62px;font-size:8.6px;color:#111;transform:scaleX(0.7553);transform-origin:0 0;">R100_LetOff1.SFC_LetOff1Loading.GT[1]</div>
<svg style="left:490.5px;top:560.9px" width="8" height="6" viewBox="0 0 8 6"><path d="M0.5 0.5H6.9V2.6L3.7 5L0.5 2.6Z" fill="#fff" stroke="#a3a3a3" stroke-width="1"/></svg>
<div class="t m" style="left:499.3px;top:548.97px;font-size:8.27px"><span style="color:#111">(</span><span style="color:#801818">I_LetOff1_UnlockStockRoll</span></div>
<div class="t m" style="left:499.3px;top:560.97px;font-size:8.27px"><span style="color:#111">&amp;</span><span style="color:#111">&nbsp;</span><span style="color:#111">NOT</span><span style="color:#111">&nbsp;</span><span style="color:#801818">I_PU1a_AutoStart</span><span style="color:#111">)</span></div>
<div class="t m" style="left:499.3px;top:572.97px;font-size:8.27px"><span style="color:#111">OR</span><span style="color:#111">&nbsp;</span><span style="color:#111">Not</span><span style="color:#111">&nbsp;</span><span style="color:#801818">R100_LetOff1.I.SelectBobbin</span></div>
<div class="t m" style="left:499.3px;top:584.97px;font-size:8.27px"><span style="color:#111">OR</span><span style="color:#111">&nbsp;</span><span style="color:#111">Not</span><span style="color:#111">&nbsp;</span><span style="color:#801818">I_PU1a_AutoStop</span></div>
<svg style="left:979.5px;top:381.09999999999997px" width="8" height="6" viewBox="0 0 8 6"><path d="M0.5 5.2V2.8L3.7 0.5L6.9 2.8V5.2Z" fill="#fff" stroke="#a3a3a3" stroke-width="1"/></svg>
<div class="a" style="left:962.2px;top:403.9px;width:41.59999999999991px;height:1px;background:#a3a3a3"></div>
<svg style="left:965.3px;top:390.9px" width="12" height="12" viewBox="0 0 12 12"><circle cx="6" cy="6" r="4.8" fill="#fff" stroke="#bdbdbd" stroke-width="0.9"/><path d="M4 8.6H8" stroke="#444" stroke-width="0.9" stroke-dasharray="1 0.6"/></svg>
<div class="t tn" style="left:998.1px;top:392.42px;font-size:8.6px;color:#111;transform:scaleX(0.7334);transform-origin:0 0;">R100_LetOff1.SFC_LetOff1Loading.GT1[0]</div>
<svg style="left:979.5px;top:420.7px" width="8" height="6" viewBox="0 0 8 6"><path d="M0.5 0.5H6.9V2.6L3.7 5L0.5 2.6Z" fill="#fff" stroke="#a3a3a3" stroke-width="1"/></svg>
<div class="t m" style="left:988.3px;top:408.77px;font-size:8.27px"><span style="color:#801818">R050_B_LetOff1_ManualMode</span></div>
<div class="t m" style="left:988.3px;top:420.77px;font-size:8.27px"><span style="color:#111">&amp;</span><span style="color:#111">&nbsp;</span><span style="color:#801818">I_PU1a_AutoStart</span></div>
<div class="t m" style="left:988.3px;top:432.77px;font-size:8.27px"><span style="color:#111">&amp;</span><span style="color:#111">&nbsp;</span><span style="color:#801818">R100_LetOff1.I.SelectPoly</span></div>
<svg style="left:979.5px;top:464.9px" width="8" height="6" viewBox="0 0 8 6"><path d="M0.5 5.2V2.8L3.7 0.5L6.9 2.8V5.2Z" fill="#fff" stroke="#a3a3a3" stroke-width="1"/></svg>
<div class="a" style="left:907.3px;top:470.4px;width:152.5px;height:34px;border:1px solid #a3a3a3;background:#fff"></div>
<svg style="left:910.4px;top:473.79999999999995px" width="12" height="12" viewBox="0 0 12 12"><circle cx="6" cy="6" r="4.8" fill="#fff" stroke="#bdbdbd" stroke-width="0.9"/><path d="M4 8.6H8" stroke="#444" stroke-width="0.9" stroke-dasharray="1 0.6"/></svg>
<div class="t tn" style="left:923.1999999999999px;top:490.62px;font-size:8.6px;color:#111;transform:scaleX(0.7530);transform-origin:0 0;">R100_LetOff1.SFC_LetOff1Loading.GE[2]</div>
<svg style="left:979.5px;top:503.9px" width="8" height="6" viewBox="0 0 8 6"><path d="M0.5 0.5H6.9V2.6L3.7 5L0.5 2.6Z" fill="#fff" stroke="#a3a3a3" stroke-width="1"/></svg>
<div class="a" style="left:1066.7px;top:480.0px;width:13.700000000000045px;height:1px;background:#a3a3a3"></div>
<svg style="left:1059.7px;top:476.5px" width="8" height="8" viewBox="0 0 8 8"><circle cx="4" cy="4" r="3.2" fill="#fff" stroke="#c0c0c0" stroke-width="0.8"/><path d="M2.5 3.3H5.5M2.5 4.9H5.5" stroke="#c0c0c0" stroke-width="0.6"/></svg>
<div class="a" style="left:1080.4px;top:470.4px;width:296px;height:27.2px;border:1px solid #a3a3a3;background:#fff"></div>
<div class="a" style="left:1081.4px;top:471.4px;width:294px;height:12.5px;background:#e8e8e8"></div>
<div class="a" style="left:1094.9px;top:471.4px;width:1px;height:12.5px;background:#cfcfcf"></div>
<div class="t" style="left:1083.4px;top:473.12px;font-size:8.6px;color:#222;">N</div>
<div class="t tn" style="left:1107.4px;top:473.12px;font-size:8.6px;color:#111;transform:scaleX(0.7624);transform-origin:0 0;">R100_LetOff1.SFC_LetOff1Loading.GA[2]</div>
<svg style="left:1364.4px;top:472.4px" width="11" height="11" viewBox="0 0 11 11"><circle cx="5" cy="5" r="4.6" fill="#fff" stroke="#c8c8c8" stroke-width="0.9"/><path d="M3.2 7.6H6.8" stroke="#444" stroke-width="0.9" stroke-dasharray="1 0.6"/></svg>
<div class="t m" style="left:1080.6000000000001px;top:487.07px;font-size:8.27px"><span style="color:#801818">R100_LetOff1.SFC_LetOff1Loading.V_Active_Step_Number</span><span style="color:#111">&nbsp;</span><span style="color:#111">:=</span><span style="color:#111">&nbsp;</span><span style="color:#111">2;</span></div>
<svg style="left:979.5px;top:521.3000000000001px" width="8" height="6" viewBox="0 0 8 6"><path d="M0.5 5.2V2.8L3.7 0.5L6.9 2.8V5.2Z" fill="#fff" stroke="#a3a3a3" stroke-width="1"/></svg>
<div class="a" style="left:962.2px;top:544.1px;width:41.59999999999991px;height:1px;background:#a3a3a3"></div>
<svg style="left:965.3px;top:531.1px" width="12" height="12" viewBox="0 0 12 12"><circle cx="6" cy="6" r="4.8" fill="#fff" stroke="#bdbdbd" stroke-width="0.9"/><path d="M4 8.6H8" stroke="#444" stroke-width="0.9" stroke-dasharray="1 0.6"/></svg>
<div class="t tn" style="left:998.1px;top:532.62px;font-size:8.6px;color:#111;transform:scaleX(0.7553);transform-origin:0 0;">R100_LetOff1.SFC_LetOff1Loading.GT[2]</div>
<svg style="left:979.5px;top:560.9px" width="8" height="6" viewBox="0 0 8 6"><path d="M0.5 0.5H6.9V2.6L3.7 5L0.5 2.6Z" fill="#fff" stroke="#a3a3a3" stroke-width="1"/></svg>
<div class="t m" style="left:988.3px;top:548.97px;font-size:8.27px"><span style="color:#111">(</span><span style="color:#801818">I_LetOff1_UnlockEnvelope</span></div>
<div class="t m" style="left:988.3px;top:560.97px;font-size:8.27px"><span style="color:#111">&amp;</span><span style="color:#111">&nbsp;</span><span style="color:#111">NOT</span><span style="color:#111">&nbsp;</span><span style="color:#801818">I_PU1a_AutoStart</span><span style="color:#111">)</span></div>
<div class="t m" style="left:988.3px;top:572.97px;font-size:8.27px"><span style="color:#111">OR</span><span style="color:#111">&nbsp;</span><span style="color:#111">Not</span><span style="color:#111">&nbsp;</span><span style="color:#801818">R100_LetOff1.I.SelectPoly</span></div>
<div class="t m" style="left:988.3px;top:584.97px;font-size:8.27px"><span style="color:#111">OR</span><span style="color:#111">&nbsp;</span><span style="color:#111">Not</span><span style="color:#111">&nbsp;</span><span style="color:#801818">I_PU1a_AutoStop</span></div>
<svg style="left:1509.5px;top:381.09999999999997px" width="8" height="6" viewBox="0 0 8 6"><path d="M0.5 5.2V2.8L3.7 0.5L6.9 2.8V5.2Z" fill="#fff" stroke="#a3a3a3" stroke-width="1"/></svg>
<div class="a" style="left:1492.2px;top:403.9px;width:41.59999999999991px;height:1px;background:#a3a3a3"></div>
<svg style="left:1495.3px;top:390.9px" width="12" height="12" viewBox="0 0 12 12"><circle cx="6" cy="6" r="4.8" fill="#fff" stroke="#bdbdbd" stroke-width="0.9"/><path d="M4 8.6H8" stroke="#444" stroke-width="0.9" stroke-dasharray="1 0.6"/></svg>
<div class="t tn" style="left:1528.1px;top:392.42px;font-size:8.6px;color:#111;transform:scaleX(0.7334);transform-origin:0 0;">R100_LetOff1.SFC_LetOff1Loading.GT1[1]</div>
<svg style="left:1509.5px;top:420.7px" width="8" height="6" viewBox="0 0 8 6"><path d="M0.5 0.5H6.9V2.6L3.7 5L0.5 2.6Z" fill="#fff" stroke="#a3a3a3" stroke-width="1"/></svg>
<div class="t m" style="left:1518.3px;top:408.77px;font-size:8.27px"><span style="color:#801818">R050_B_LetOff1_ManualMode</span></div>
<div class="t m" style="left:1518.3px;top:420.77px;font-size:8.27px"><span style="color:#111">&amp;</span><span style="color:#111">&nbsp;</span><span style="color:#801818">I_PU1a_AutoStart</span></div>
<div class="t m" style="left:1518.3px;top:432.77px;font-size:8.27px"><span style="color:#111">&amp;</span><span style="color:#111">&nbsp;</span><span style="color:#111">Not</span><span style="color:#111">&nbsp;</span><span style="color:#801818">R100_LetOff1.I.SelectPoly</span></div>
<div class="t m" style="left:1518.3px;top:444.77px;font-size:8.27px"><span style="color:#111">&amp;</span><span style="color:#111">&nbsp;</span><span style="color:#111">Not</span><span style="color:#111">&nbsp;</span><span style="color:#801818">R100_LetOff1.I.SelectBobbin</span></div>
<div class="t m" style="left:1518.3px;top:456.77px;font-size:8.27px"><span style="color:#111">&amp;</span><span style="color:#111">&nbsp;</span><span style="color:#111">Not</span><span style="color:#111">&nbsp;</span><span style="color:#801818">R100_LetOff1.I.SelectRotationRev</span></div>
<svg style="left:1509.5px;top:464.9px" width="8" height="6" viewBox="0 0 8 6"><path d="M0.5 5.2V2.8L3.7 0.5L6.9 2.8V5.2Z" fill="#fff" stroke="#a3a3a3" stroke-width="1"/></svg>
<div class="a" style="left:1437.3px;top:470.4px;width:152.5px;height:34px;border:1px solid #a3a3a3;background:#fff"></div>
<svg style="left:1440.3999999999999px;top:473.79999999999995px" width="12" height="12" viewBox="0 0 12 12"><circle cx="6" cy="6" r="4.8" fill="#fff" stroke="#bdbdbd" stroke-width="0.9"/><path d="M4 8.6H8" stroke="#444" stroke-width="0.9" stroke-dasharray="1 0.6"/></svg>
<div class="t tn" style="left:1453.2px;top:490.62px;font-size:8.6px;color:#111;transform:scaleX(0.7530);transform-origin:0 0;">R100_LetOff1.SFC_LetOff1Loading.GE[3]</div>
<svg style="left:1509.5px;top:503.9px" width="8" height="6" viewBox="0 0 8 6"><path d="M0.5 0.5H6.9V2.6L3.7 5L0.5 2.6Z" fill="#fff" stroke="#a3a3a3" stroke-width="1"/></svg>
<div class="a" style="left:1596.7px;top:480.0px;width:13.700000000000045px;height:1px;background:#a3a3a3"></div>
<svg style="left:1589.7px;top:476.5px" width="8" height="8" viewBox="0 0 8 8"><circle cx="4" cy="4" r="3.2" fill="#fff" stroke="#c0c0c0" stroke-width="0.8"/><path d="M2.5 3.3H5.5M2.5 4.9H5.5" stroke="#c0c0c0" stroke-width="0.6"/></svg>
<div class="a" style="left:1610.4px;top:470.4px;width:296px;height:27.2px;border:1px solid #a3a3a3;background:#fff"></div>
<div class="a" style="left:1611.4px;top:471.4px;width:294px;height:12.5px;background:#e8e8e8"></div>
<div class="a" style="left:1624.9px;top:471.4px;width:1px;height:12.5px;background:#cfcfcf"></div>
<div class="t" style="left:1613.4px;top:473.12px;font-size:8.6px;color:#222;">N</div>
<div class="t tn" style="left:1637.4px;top:473.12px;font-size:8.6px;color:#111;transform:scaleX(0.7624);transform-origin:0 0;">R100_LetOff1.SFC_LetOff1Loading.GA[3]</div>
<svg style="left:1894.4px;top:472.4px" width="11" height="11" viewBox="0 0 11 11"><circle cx="5" cy="5" r="4.6" fill="#fff" stroke="#c8c8c8" stroke-width="0.9"/><path d="M3.2 7.6H6.8" stroke="#444" stroke-width="0.9" stroke-dasharray="1 0.6"/></svg>
<div class="t m" style="left:1610.6000000000001px;top:487.07px;font-size:8.27px"><span style="color:#801818">R100_LetOff1.SFC_LetOff1Loading.V_Active_Step_Number</span><span style="color:#111">&nbsp;</span><span style="color:#111">:=</span><span style="color:#111">&nbsp;</span><span style="color:#111">3;</span></div>
<svg style="left:1509.5px;top:521.3000000000001px" width="8" height="6" viewBox="0 0 8 6"><path d="M0.5 5.2V2.8L3.7 0.5L6.9 2.8V5.2Z" fill="#fff" stroke="#a3a3a3" stroke-width="1"/></svg>
<div class="a" style="left:1492.2px;top:544.1px;width:41.59999999999991px;height:1px;background:#a3a3a3"></div>
<svg style="left:1495.3px;top:531.1px" width="12" height="12" viewBox="0 0 12 12"><circle cx="6" cy="6" r="4.8" fill="#fff" stroke="#bdbdbd" stroke-width="0.9"/><path d="M4 8.6H8" stroke="#444" stroke-width="0.9" stroke-dasharray="1 0.6"/></svg>
<div class="t tn" style="left:1528.1px;top:532.62px;font-size:8.6px;color:#111;transform:scaleX(0.7553);transform-origin:0 0;">R100_LetOff1.SFC_LetOff1Loading.GT[3]</div>
<svg style="left:1509.5px;top:560.9px" width="8" height="6" viewBox="0 0 8 6"><path d="M0.5 0.5H6.9V2.6L3.7 5L0.5 2.6Z" fill="#fff" stroke="#a3a3a3" stroke-width="1"/></svg>
<div class="t m" style="left:1518.3px;top:548.97px;font-size:8.27px"><span style="color:#111">Not</span><span style="color:#111">&nbsp;</span><span style="color:#801818">I_PU1a_AutoStop</span></div>
<div class="t m" style="left:1518.3px;top:560.97px;font-size:8.27px"><span style="color:#111">OR</span><span style="color:#111">&nbsp;</span><span style="color:#801818">R100_LetOff1.I.SelectPoly</span></div>
<div class="t m" style="left:1518.3px;top:572.97px;font-size:8.27px"><span style="color:#111">OR</span><span style="color:#111">&nbsp;</span><span style="color:#801818">R100_LetOff1.I.SelectBobbin</span></div>
<div class="t m" style="left:1518.3px;top:584.97px;font-size:8.27px"><span style="color:#111">OR</span><span style="color:#111">&nbsp;</span><span style="color:#801818">R100_LetOff1.I.ProductOnLiner</span></div>
<div class="t m" style="left:1518.3px;top:596.97px;font-size:8.27px"><span style="color:#111">OR</span><span style="color:#111">&nbsp;</span><span style="color:#801818">R100_LetOff1.I.EndProduct</span></div>
<svg style="left:490.5px;top:675.2px" width="8" height="6" viewBox="0 0 8 6"><path d="M0.5 5.2V2.8L3.7 0.5L6.9 2.8V5.2Z" fill="#fff" stroke="#a3a3a3" stroke-width="1"/></svg>
<div class="a" style="left:418.3px;top:680.7px;width:152.49999999999994px;height:34px;border:1px solid #a3a3a3;background:#fff"></div>
<svg style="left:421.40000000000003px;top:684.1px" width="12" height="12" viewBox="0 0 12 12"><circle cx="6" cy="6" r="4.8" fill="#fff" stroke="#bdbdbd" stroke-width="0.9"/><path d="M4 8.6H8" stroke="#444" stroke-width="0.9" stroke-dasharray="1 0.6"/></svg>
<div class="t tn" style="left:434.2px;top:700.92px;font-size:8.6px;color:#111;transform:scaleX(0.7313);transform-origin:0 0;">R100_LetOff1.SFC_LetOff1Loading.GE[31]</div>
<svg style="left:490.5px;top:714.2px" width="8" height="6" viewBox="0 0 8 6"><path d="M0.5 0.5H6.9V2.6L3.7 5L0.5 2.6Z" fill="#fff" stroke="#a3a3a3" stroke-width="1"/></svg>
<div class="a" style="left:577.7px;top:690.3px;width:13.799999999999955px;height:1px;background:#a3a3a3"></div>
<svg style="left:570.7px;top:686.8px" width="8" height="8" viewBox="0 0 8 8"><circle cx="4" cy="4" r="3.2" fill="#fff" stroke="#c0c0c0" stroke-width="0.8"/><path d="M2.5 3.3H5.5M2.5 4.9H5.5" stroke="#c0c0c0" stroke-width="0.6"/></svg>
<div class="a" style="left:591.5px;top:680.7px;width:301.4px;height:27.2px;border:1px solid #a3a3a3;background:#fff"></div>
<div class="a" style="left:592.5px;top:681.7px;width:299.4px;height:12.5px;background:#e8e8e8"></div>
<div class="a" style="left:606.0px;top:681.7px;width:1px;height:12.5px;background:#cfcfcf"></div>
<div class="t" style="left:594.5px;top:683.42px;font-size:8.6px;color:#222;">N</div>
<div class="t tn" style="left:618.5px;top:683.42px;font-size:8.6px;color:#111;transform:scaleX(0.7403);transform-origin:0 0;">R100_LetOff1.SFC_LetOff1Loading.GA[31]</div>
<svg style="left:880.9px;top:682.7px" width="11" height="11" viewBox="0 0 11 11"><circle cx="5" cy="5" r="4.6" fill="#fff" stroke="#c8c8c8" stroke-width="0.9"/><path d="M3.2 7.6H6.8" stroke="#444" stroke-width="0.9" stroke-dasharray="1 0.6"/></svg>
<div class="t m" style="left:591.7px;top:697.37px;font-size:8.27px"><span style="color:#801818">R100_LetOff1.SFC_LetOff1Loading.V_Active_Step_Number</span><span style="color:#111">&nbsp;</span><span style="color:#111">:=</span><span style="color:#111">&nbsp;</span><span style="color:#111">31;</span></div>
<div class="a" style="left:591.5px;top:707.8px;width:301.4px;height:27.2px;border:1px solid #a3a3a3;background:#fff"></div>
<div class="a" style="left:592.5px;top:708.8px;width:299.4px;height:12.5px;background:#e8e8e8"></div>
<div class="a" style="left:606.0px;top:708.8px;width:1px;height:12.5px;background:#cfcfcf"></div>
<div class="t" style="left:594.5px;top:710.52px;font-size:8.6px;color:#222;">P0</div>
<div class="t tn" style="left:618.5px;top:710.52px;font-size:8.6px;color:#111;transform:scaleX(0.7196);transform-origin:0 0;">R100_LetOff1.SFC_LetOff1Loading.GA1[31]</div>
<svg style="left:880.9px;top:709.8px" width="11" height="11" viewBox="0 0 11 11"><circle cx="5" cy="5" r="4.6" fill="#fff" stroke="#c8c8c8" stroke-width="0.9"/><path d="M3.2 7.6H6.8" stroke="#444" stroke-width="0.9" stroke-dasharray="1 0.6"/></svg>
<div class="t m" style="left:591.7px;top:724.47px;font-size:8.27px"><span style="color:#801818">R100_LetOff1.SFC_LetOff1Loading.V_Active_Step_Number</span><span style="color:#111">&nbsp;</span><span style="color:#111">:=</span><span style="color:#111">&nbsp;</span><span style="color:#111">0;</span></div>
<svg style="left:490.5px;top:743.7px" width="8" height="6" viewBox="0 0 8 6"><path d="M0.5 5.2V2.8L3.7 0.5L6.9 2.8V5.2Z" fill="#fff" stroke="#a3a3a3" stroke-width="1"/></svg>
<div class="a" style="left:473.2px;top:766.5px;width:41.599999999999966px;height:1px;background:#a3a3a3"></div>
<svg style="left:476.3px;top:753.5px" width="12" height="12" viewBox="0 0 12 12"><circle cx="6" cy="6" r="4.8" fill="#fff" stroke="#bdbdbd" stroke-width="0.9"/><path d="M4 8.6H8" stroke="#444" stroke-width="0.9" stroke-dasharray="1 0.6"/></svg>
<div class="t tn" style="left:509.1px;top:755.02px;font-size:8.6px;color:#111;transform:scaleX(0.7334);transform-origin:0 0;">R100_LetOff1.SFC_LetOff1Loading.GT[31]</div>
<svg style="left:490.5px;top:783.3px" width="8" height="6" viewBox="0 0 8 6"><path d="M0.5 0.5H6.9V2.6L3.7 5L0.5 2.6Z" fill="#fff" stroke="#a3a3a3" stroke-width="1"/></svg>
<div class="t m" style="left:499.3px;top:771.37px;font-size:8.27px"><span style="color:#801818">R050_B_LetOff1_ManualMode</span></div>
<div class="t m" style="left:499.3px;top:783.37px;font-size:8.27px"><span style="color:#111">&amp;</span><span style="color:#111">&nbsp;</span><span style="color:#111">NOT</span><span style="color:#111">&nbsp;</span><span style="color:#801818">I_PU1a_AutoStart</span></div>
<div class="a" style="left:1899px;top:190px;width:16px;height:802px;background:#f0f0f0"></div>
<div class="a" style="left:1915px;top:189px;width:2px;height:804px;background:#d6dbe9"></div>
<div class="a" style="left:1906px;top:222px;width:2.5px;height:269px;background:#7a7a7a"></div>
<div class="a" style="left:334px;top:992px;width:1583px;height:1.5px;background:#c3c7d2"></div>
<svg style="left:340px;top:997px" width="8" height="10" viewBox="0 0 8 10"><path d="M6.5 1V9.5L1.5 5.2Z" fill="#6b6b6b"/></svg>
<div class="a" style="left:410px;top:999px;width:503px;height:6px;background:#bfc3cc"></div>
<svg style="left:1885px;top:996px" width="8" height="10" viewBox="0 0 8 10"><path d="M1.5 1V9L6.5 5Z" fill="#6b6b6b"/></svg>
<div class="a" style="left:332px;top:1011px;width:1585px;height:2px;background:#c8ecfb"></div>
</body></html>
